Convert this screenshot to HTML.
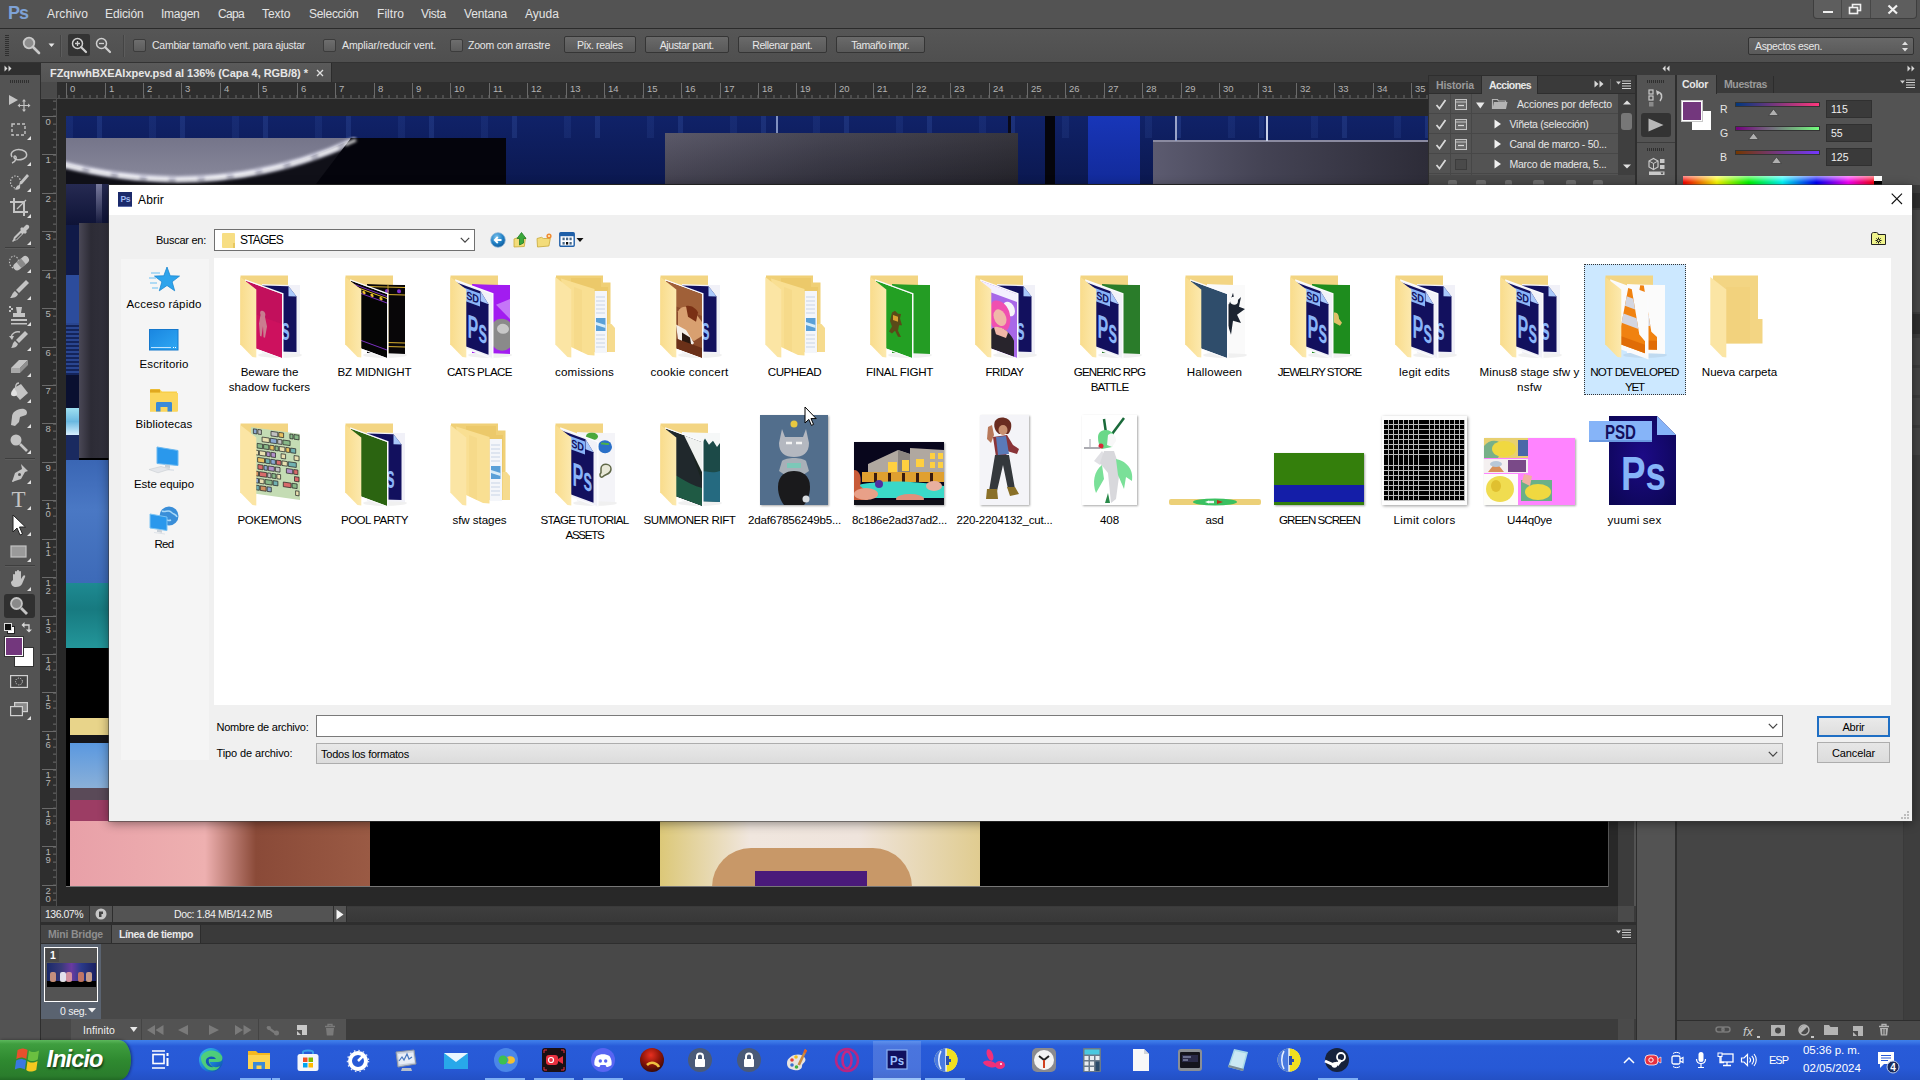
<!DOCTYPE html>
<html><head><meta charset="utf-8"><title>Abrir</title>
<style>
html,body{margin:0;padding:0;width:1920px;height:1080px;overflow:hidden;background:#535353;}
body{font-family:"Liberation Sans",sans-serif;position:relative;}
.r{position:absolute;display:block;}
.t{position:absolute;white-space:nowrap;font-family:"Liberation Sans",sans-serif;}
</style></head><body>
<!-- gen_ps -->
<div class="r" style="left:0px;top:0px;width:1920px;height:1080px;background:#535353;"></div>
<div class="r" style="left:0px;top:0px;width:1920px;height:28px;background:#535353;"></div>
<div class="r" style="left:0px;top:28px;width:1920px;height:1px;background:#2b2b2b;"></div>
<div class="t" style="left:8.00px;top:2.00px;font-size:18px;line-height:22px;color:#7ea2d6;letter-spacing:-1.009px;font-weight:bold;">Ps</div>
<div class="t" style="left:47.00px;top:6.00px;font-size:12px;line-height:16px;color:#e4e4e4;letter-spacing:0.141px;">Archivo</div>
<div class="t" style="left:105.00px;top:6.00px;font-size:12px;line-height:16px;color:#e4e4e4;letter-spacing:-0.122px;">Edición</div>
<div class="t" style="left:161.00px;top:6.00px;font-size:12px;line-height:16px;color:#e4e4e4;letter-spacing:-0.254px;">Imagen</div>
<div class="t" style="left:218.00px;top:6.00px;font-size:12px;line-height:16px;color:#e4e4e4;letter-spacing:-0.671px;">Capa</div>
<div class="t" style="left:262.00px;top:6.00px;font-size:12px;line-height:16px;color:#e4e4e4;letter-spacing:-0.036px;">Texto</div>
<div class="t" style="left:309.00px;top:6.00px;font-size:12px;line-height:16px;color:#e4e4e4;letter-spacing:-0.281px;">Selección</div>
<div class="t" style="left:377.00px;top:6.00px;font-size:12px;line-height:16px;color:#e4e4e4;letter-spacing:0.056px;">Filtro</div>
<div class="t" style="left:421.00px;top:6.00px;font-size:12px;line-height:16px;color:#e4e4e4;letter-spacing:-0.292px;">Vista</div>
<div class="t" style="left:464.00px;top:6.00px;font-size:12px;line-height:16px;color:#e4e4e4;letter-spacing:-0.149px;">Ventana</div>
<div class="t" style="left:525.00px;top:6.00px;font-size:12px;line-height:16px;color:#e4e4e4;letter-spacing:0.038px;">Ayuda</div>
<div class="r" style="left:1814px;top:0px;width:102px;height:18px;background:#5e5e5e;border-radius:0 0 3px 3px;box-shadow:0 0 0 1px #3e3e3e;"></div>
<div class="r" style="left:1841px;top:0px;width:1px;height:18px;background:#474747;"></div>
<div class="r" style="left:1870px;top:0px;width:1px;height:18px;background:#474747;"></div>
<div class="r" style="left:1823px;top:11px;width:10px;height:2px;background:#f0f0f0;"></div>
<svg class="r" style="left:1848px;top:3px" width="14" height="12"><rect x="4.5" y="1.5" width="8" height="6" fill="none" stroke="#f0f0f0" stroke-width="1.6"/><rect x="1.5" y="4.5" width="8" height="6" fill="#5e5e5e" stroke="#f0f0f0" stroke-width="1.6"/></svg>
<svg class="r" style="left:1887px;top:4px" width="12" height="11"><path d="M1.5 1.5L10 9.5M10 1.5L1.5 9.5" stroke="#f0f0f0" stroke-width="2.2"/></svg>
<div class="r" style="left:0px;top:29px;width:1920px;height:33px;background:linear-gradient(#565656,#4f4f4f);"></div>
<div class="r" style="left:0px;top:62px;width:1920px;height:1px;background:#333;"></div>
<div class="r" style="left:5px;top:35px;width:4px;height:22px;background:repeating-linear-gradient(#2f2f2f 0 1px,transparent 1px 2px);"></div>
<svg class="r" style="left:20px;top:34px" width="22" height="22"><circle cx="9" cy="9" r="5.3" fill="#8d8d8d" stroke="#c9c9c9" stroke-width="1.8"/><path d="M13 13L19 19" stroke="#c9c9c9" stroke-width="2.6" stroke-linecap="round"/></svg>
<svg class="r" style="left:48px;top:43px" width="8" height="5"><path d="M0.5 0.5h6l-3 3.5z" fill="#e8e8e8"/></svg>
<div class="r" style="left:60px;top:35px;width:1px;height:22px;background:#444;"></div>
<div class="r" style="left:61px;top:35px;width:1px;height:22px;background:#5c5c5c;"></div>
<div class="r" style="left:68px;top:34px;width:22px;height:22px;background:#333;border-radius:2px;"></div>
<svg class="r" style="left:70px;top:36px" width="20" height="20"><circle cx="7.5" cy="7.5" r="5" fill="none" stroke="#cfcfcf" stroke-width="1.5"/><path d="M11.2 11.2L16 16" stroke="#cfcfcf" stroke-width="2.2" stroke-linecap="round"/><path d="M5 7.5h5M7.5 5v5" stroke="#cfcfcf" stroke-width="1.3"/></svg>
<svg class="r" style="left:94px;top:36px" width="20" height="20"><circle cx="7.5" cy="7.5" r="5" fill="none" stroke="#cfcfcf" stroke-width="1.5"/><path d="M11.2 11.2L16 16" stroke="#cfcfcf" stroke-width="2.2" stroke-linecap="round"/><path d="M5 7.5h5" stroke="#cfcfcf" stroke-width="1.3"/></svg>
<div class="r" style="left:123px;top:35px;width:1px;height:22px;background:#444;"></div>
<div class="r" style="left:124px;top:35px;width:1px;height:22px;background:#5c5c5c;"></div>
<div class="r" style="left:133px;top:39px;width:13px;height:13px;background:linear-gradient(#6e6e6e,#5c5c5c);border:1px solid #3c3c3c;box-sizing:border-box;border-radius:2px;"></div>
<div class="t" style="left:152.00px;top:37.75px;font-size:10.5px;line-height:14.5px;color:#e6e6e6;letter-spacing:-0.262px;">Cambiar tamaño vent. para ajustar</div>
<div class="r" style="left:323px;top:39px;width:13px;height:13px;background:linear-gradient(#6e6e6e,#5c5c5c);border:1px solid #3c3c3c;box-sizing:border-box;border-radius:2px;"></div>
<div class="t" style="left:342.00px;top:37.75px;font-size:10.5px;line-height:14.5px;color:#e6e6e6;letter-spacing:-0.109px;">Ampliar/reducir vent.</div>
<div class="r" style="left:450px;top:39px;width:13px;height:13px;background:linear-gradient(#6e6e6e,#5c5c5c);border:1px solid #3c3c3c;box-sizing:border-box;border-radius:2px;"></div>
<div class="t" style="left:468.00px;top:37.75px;font-size:10.5px;line-height:14.5px;color:#e6e6e6;letter-spacing:-0.222px;">Zoom con arrastre</div>
<div class="r" style="left:564px;top:36px;width:71.5px;height:17px;background:linear-gradient(#6a6a6a,#595959);border:1px solid #353535;box-sizing:border-box;border-radius:2px;"></div>
<div class="t" style="left:576.93px;top:37.75px;font-size:10.5px;line-height:14.5px;color:#e8e8e8;letter-spacing:-0.361px;">Píx. reales</div>
<div class="r" style="left:645px;top:36px;width:83.5px;height:17px;background:linear-gradient(#6a6a6a,#595959);border:1px solid #353535;box-sizing:border-box;border-radius:2px;"></div>
<div class="t" style="left:659.63px;top:37.75px;font-size:10.5px;line-height:14.5px;color:#e8e8e8;letter-spacing:-0.363px;">Ajustar pant.</div>
<div class="r" style="left:738px;top:36px;width:88.5px;height:17px;background:linear-gradient(#6a6a6a,#595959);border:1px solid #353535;box-sizing:border-box;border-radius:2px;"></div>
<div class="t" style="left:752.18px;top:37.75px;font-size:10.5px;line-height:14.5px;color:#e8e8e8;letter-spacing:-0.374px;">Rellenar pant.</div>
<div class="r" style="left:836px;top:36px;width:88.5px;height:17px;background:linear-gradient(#6a6a6a,#595959);border:1px solid #353535;box-sizing:border-box;border-radius:2px;"></div>
<div class="t" style="left:851.26px;top:37.75px;font-size:10.5px;line-height:14.5px;color:#e8e8e8;letter-spacing:-0.420px;">Tamaño impr.</div>
<div class="r" style="left:1748px;top:37px;width:166px;height:18px;background:linear-gradient(#686868,#5a5a5a);border:1px solid #333;box-sizing:border-box;border-radius:2px;"></div>
<div class="t" style="left:1755.00px;top:38.75px;font-size:10.5px;line-height:14.5px;color:#e8e8e8;letter-spacing:-0.342px;">Aspectos esen.</div>
<svg class="r" style="left:1901px;top:41px" width="8" height="11"><path d="M1 4l3-3.5 3 3.5zM1 7l3 3.5 3-3.5z" fill="#e0e0e0"/></svg>
<!-- gen_doc -->
<div class="r" style="left:41px;top:63px;width:1387px;height:19px;background:#3a3a3a;"></div>
<div class="r" style="left:41px;top:63px;width:290px;height:19px;background:linear-gradient(#5a5a5a,#535353);border-right:1px solid #2c2c2c;"></div>
<div class="t" style="left:50.00px;top:65.50px;font-size:11px;line-height:15px;color:#e6e6e6;letter-spacing:-0.035px;font-weight:bold;">FZqnwhBXEAIxpev.psd al 136% (Capa 4, RGB/8) *</div>
<svg class="r" style="left:316px;top:69px" width="8" height="8"><path d="M1 1l6 6M7 1l-6 6" stroke="#e0e0e0" stroke-width="1.3"/></svg>
<div class="r" style="left:57px;top:99px;width:1561px;height:807px;background:#282828;"></div>
<div class="r" style="left:41px;top:82px;width:1387px;height:17px;background:#2e2e2e;"></div>
<div class="r" style="left:41px;top:82px;width:16px;height:16px;background:#4a4a4a;"></div>
<div class="r" style="left:41px;top:98px;width:1387px;height:1px;background:#4f4f4f;"></div>
<div class="r" style="left:66px;top:83px;width:1px;height:15px;background:#6a6a6a;"></div>
<div class="t" style="left:70.00px;top:81.75px;font-size:9.5px;line-height:13.5px;color:#b4b4b4;">0</div>
<div class="r" style="left:105px;top:83px;width:1px;height:15px;background:#6a6a6a;"></div>
<div class="t" style="left:109.00px;top:81.75px;font-size:9.5px;line-height:13.5px;color:#b4b4b4;">1</div>
<div class="r" style="left:143px;top:83px;width:1px;height:15px;background:#6a6a6a;"></div>
<div class="t" style="left:147.00px;top:81.75px;font-size:9.5px;line-height:13.5px;color:#b4b4b4;">2</div>
<div class="r" style="left:181px;top:83px;width:1px;height:15px;background:#6a6a6a;"></div>
<div class="t" style="left:185.00px;top:81.75px;font-size:9.5px;line-height:13.5px;color:#b4b4b4;">3</div>
<div class="r" style="left:220px;top:83px;width:1px;height:15px;background:#6a6a6a;"></div>
<div class="t" style="left:224.00px;top:81.75px;font-size:9.5px;line-height:13.5px;color:#b4b4b4;">4</div>
<div class="r" style="left:258px;top:83px;width:1px;height:15px;background:#6a6a6a;"></div>
<div class="t" style="left:262.00px;top:81.75px;font-size:9.5px;line-height:13.5px;color:#b4b4b4;">5</div>
<div class="r" style="left:297px;top:83px;width:1px;height:15px;background:#6a6a6a;"></div>
<div class="t" style="left:301.00px;top:81.75px;font-size:9.5px;line-height:13.5px;color:#b4b4b4;">6</div>
<div class="r" style="left:335px;top:83px;width:1px;height:15px;background:#6a6a6a;"></div>
<div class="t" style="left:339.00px;top:81.75px;font-size:9.5px;line-height:13.5px;color:#b4b4b4;">7</div>
<div class="r" style="left:374px;top:83px;width:1px;height:15px;background:#6a6a6a;"></div>
<div class="t" style="left:378.00px;top:81.75px;font-size:9.5px;line-height:13.5px;color:#b4b4b4;">8</div>
<div class="r" style="left:412px;top:83px;width:1px;height:15px;background:#6a6a6a;"></div>
<div class="t" style="left:416.00px;top:81.75px;font-size:9.5px;line-height:13.5px;color:#b4b4b4;">9</div>
<div class="r" style="left:450px;top:83px;width:1px;height:15px;background:#6a6a6a;"></div>
<div class="t" style="left:454.00px;top:81.75px;font-size:9.5px;line-height:13.5px;color:#b4b4b4;">10</div>
<div class="r" style="left:489px;top:83px;width:1px;height:15px;background:#6a6a6a;"></div>
<div class="t" style="left:493.00px;top:81.75px;font-size:9.5px;line-height:13.5px;color:#b4b4b4;">11</div>
<div class="r" style="left:527px;top:83px;width:1px;height:15px;background:#6a6a6a;"></div>
<div class="t" style="left:531.00px;top:81.75px;font-size:9.5px;line-height:13.5px;color:#b4b4b4;">12</div>
<div class="r" style="left:566px;top:83px;width:1px;height:15px;background:#6a6a6a;"></div>
<div class="t" style="left:570.00px;top:81.75px;font-size:9.5px;line-height:13.5px;color:#b4b4b4;">13</div>
<div class="r" style="left:604px;top:83px;width:1px;height:15px;background:#6a6a6a;"></div>
<div class="t" style="left:608.00px;top:81.75px;font-size:9.5px;line-height:13.5px;color:#b4b4b4;">14</div>
<div class="r" style="left:643px;top:83px;width:1px;height:15px;background:#6a6a6a;"></div>
<div class="t" style="left:647.00px;top:81.75px;font-size:9.5px;line-height:13.5px;color:#b4b4b4;">15</div>
<div class="r" style="left:681px;top:83px;width:1px;height:15px;background:#6a6a6a;"></div>
<div class="t" style="left:685.00px;top:81.75px;font-size:9.5px;line-height:13.5px;color:#b4b4b4;">16</div>
<div class="r" style="left:720px;top:83px;width:1px;height:15px;background:#6a6a6a;"></div>
<div class="t" style="left:724.00px;top:81.75px;font-size:9.5px;line-height:13.5px;color:#b4b4b4;">17</div>
<div class="r" style="left:758px;top:83px;width:1px;height:15px;background:#6a6a6a;"></div>
<div class="t" style="left:762.00px;top:81.75px;font-size:9.5px;line-height:13.5px;color:#b4b4b4;">18</div>
<div class="r" style="left:796px;top:83px;width:1px;height:15px;background:#6a6a6a;"></div>
<div class="t" style="left:800.00px;top:81.75px;font-size:9.5px;line-height:13.5px;color:#b4b4b4;">19</div>
<div class="r" style="left:835px;top:83px;width:1px;height:15px;background:#6a6a6a;"></div>
<div class="t" style="left:839.00px;top:81.75px;font-size:9.5px;line-height:13.5px;color:#b4b4b4;">20</div>
<div class="r" style="left:873px;top:83px;width:1px;height:15px;background:#6a6a6a;"></div>
<div class="t" style="left:877.00px;top:81.75px;font-size:9.5px;line-height:13.5px;color:#b4b4b4;">21</div>
<div class="r" style="left:912px;top:83px;width:1px;height:15px;background:#6a6a6a;"></div>
<div class="t" style="left:916.00px;top:81.75px;font-size:9.5px;line-height:13.5px;color:#b4b4b4;">22</div>
<div class="r" style="left:950px;top:83px;width:1px;height:15px;background:#6a6a6a;"></div>
<div class="t" style="left:954.00px;top:81.75px;font-size:9.5px;line-height:13.5px;color:#b4b4b4;">23</div>
<div class="r" style="left:989px;top:83px;width:1px;height:15px;background:#6a6a6a;"></div>
<div class="t" style="left:993.00px;top:81.75px;font-size:9.5px;line-height:13.5px;color:#b4b4b4;">24</div>
<div class="r" style="left:1027px;top:83px;width:1px;height:15px;background:#6a6a6a;"></div>
<div class="t" style="left:1031.00px;top:81.75px;font-size:9.5px;line-height:13.5px;color:#b4b4b4;">25</div>
<div class="r" style="left:1065px;top:83px;width:1px;height:15px;background:#6a6a6a;"></div>
<div class="t" style="left:1069.00px;top:81.75px;font-size:9.5px;line-height:13.5px;color:#b4b4b4;">26</div>
<div class="r" style="left:1104px;top:83px;width:1px;height:15px;background:#6a6a6a;"></div>
<div class="t" style="left:1108.00px;top:81.75px;font-size:9.5px;line-height:13.5px;color:#b4b4b4;">27</div>
<div class="r" style="left:1142px;top:83px;width:1px;height:15px;background:#6a6a6a;"></div>
<div class="t" style="left:1146.00px;top:81.75px;font-size:9.5px;line-height:13.5px;color:#b4b4b4;">28</div>
<div class="r" style="left:1181px;top:83px;width:1px;height:15px;background:#6a6a6a;"></div>
<div class="t" style="left:1185.00px;top:81.75px;font-size:9.5px;line-height:13.5px;color:#b4b4b4;">29</div>
<div class="r" style="left:1219px;top:83px;width:1px;height:15px;background:#6a6a6a;"></div>
<div class="t" style="left:1223.00px;top:81.75px;font-size:9.5px;line-height:13.5px;color:#b4b4b4;">30</div>
<div class="r" style="left:1258px;top:83px;width:1px;height:15px;background:#6a6a6a;"></div>
<div class="t" style="left:1262.00px;top:81.75px;font-size:9.5px;line-height:13.5px;color:#b4b4b4;">31</div>
<div class="r" style="left:1296px;top:83px;width:1px;height:15px;background:#6a6a6a;"></div>
<div class="t" style="left:1300.00px;top:81.75px;font-size:9.5px;line-height:13.5px;color:#b4b4b4;">32</div>
<div class="r" style="left:1334px;top:83px;width:1px;height:15px;background:#6a6a6a;"></div>
<div class="t" style="left:1338.00px;top:81.75px;font-size:9.5px;line-height:13.5px;color:#b4b4b4;">33</div>
<div class="r" style="left:1373px;top:83px;width:1px;height:15px;background:#6a6a6a;"></div>
<div class="t" style="left:1377.00px;top:81.75px;font-size:9.5px;line-height:13.5px;color:#b4b4b4;">34</div>
<div class="r" style="left:1411px;top:83px;width:1px;height:15px;background:#6a6a6a;"></div>
<div class="t" style="left:1415.00px;top:81.75px;font-size:9.5px;line-height:13.5px;color:#b4b4b4;">35</div>
<div class="r" style="left:57px;top:95px;width:1371px;height:3px;background:repeating-linear-gradient(90deg,#6a6a6a 0 1px,transparent 1px 7.686px);background-position:1.51px 0;"></div>
<div class="r" style="left:41px;top:99px;width:16px;height:807px;background:#2e2e2e;"></div>
<div class="r" style="left:56px;top:99px;width:1px;height:807px;background:#4f4f4f;"></div>
<div class="r" style="left:42px;top:116px;width:14px;height:1px;background:#6a6a6a;"></div>
<div class="t" style="left:45.50px;top:115.25px;font-size:9.5px;line-height:13.5px;color:#b4b4b4;">0</div>
<div class="r" style="left:42px;top:154px;width:14px;height:1px;background:#6a6a6a;"></div>
<div class="t" style="left:45.50px;top:153.25px;font-size:9.5px;line-height:13.5px;color:#b4b4b4;">1</div>
<div class="r" style="left:42px;top:193px;width:14px;height:1px;background:#6a6a6a;"></div>
<div class="t" style="left:45.50px;top:192.25px;font-size:9.5px;line-height:13.5px;color:#b4b4b4;">2</div>
<div class="r" style="left:42px;top:231px;width:14px;height:1px;background:#6a6a6a;"></div>
<div class="t" style="left:45.50px;top:230.25px;font-size:9.5px;line-height:13.5px;color:#b4b4b4;">3</div>
<div class="r" style="left:42px;top:270px;width:14px;height:1px;background:#6a6a6a;"></div>
<div class="t" style="left:45.50px;top:269.25px;font-size:9.5px;line-height:13.5px;color:#b4b4b4;">4</div>
<div class="r" style="left:42px;top:308px;width:14px;height:1px;background:#6a6a6a;"></div>
<div class="t" style="left:45.50px;top:307.25px;font-size:9.5px;line-height:13.5px;color:#b4b4b4;">5</div>
<div class="r" style="left:42px;top:347px;width:14px;height:1px;background:#6a6a6a;"></div>
<div class="t" style="left:45.50px;top:346.25px;font-size:9.5px;line-height:13.5px;color:#b4b4b4;">6</div>
<div class="r" style="left:42px;top:385px;width:14px;height:1px;background:#6a6a6a;"></div>
<div class="t" style="left:45.50px;top:384.25px;font-size:9.5px;line-height:13.5px;color:#b4b4b4;">7</div>
<div class="r" style="left:42px;top:423px;width:14px;height:1px;background:#6a6a6a;"></div>
<div class="t" style="left:45.50px;top:422.25px;font-size:9.5px;line-height:13.5px;color:#b4b4b4;">8</div>
<div class="r" style="left:42px;top:462px;width:14px;height:1px;background:#6a6a6a;"></div>
<div class="t" style="left:45.50px;top:461.25px;font-size:9.5px;line-height:13.5px;color:#b4b4b4;">9</div>
<div class="r" style="left:42px;top:500px;width:14px;height:1px;background:#6a6a6a;"></div>
<div class="t" style="left:45.50px;top:499.25px;font-size:9.5px;line-height:13.5px;color:#b4b4b4;">1</div>
<div class="t" style="left:45.50px;top:507.25px;font-size:9.5px;line-height:13.5px;color:#b4b4b4;">0</div>
<div class="r" style="left:42px;top:539px;width:14px;height:1px;background:#6a6a6a;"></div>
<div class="t" style="left:45.50px;top:538.25px;font-size:9.5px;line-height:13.5px;color:#b4b4b4;">1</div>
<div class="t" style="left:45.50px;top:546.25px;font-size:9.5px;line-height:13.5px;color:#b4b4b4;">1</div>
<div class="r" style="left:42px;top:577px;width:14px;height:1px;background:#6a6a6a;"></div>
<div class="t" style="left:45.50px;top:576.25px;font-size:9.5px;line-height:13.5px;color:#b4b4b4;">1</div>
<div class="t" style="left:45.50px;top:584.25px;font-size:9.5px;line-height:13.5px;color:#b4b4b4;">2</div>
<div class="r" style="left:42px;top:616px;width:14px;height:1px;background:#6a6a6a;"></div>
<div class="t" style="left:45.50px;top:615.25px;font-size:9.5px;line-height:13.5px;color:#b4b4b4;">1</div>
<div class="t" style="left:45.50px;top:623.25px;font-size:9.5px;line-height:13.5px;color:#b4b4b4;">3</div>
<div class="r" style="left:42px;top:654px;width:14px;height:1px;background:#6a6a6a;"></div>
<div class="t" style="left:45.50px;top:653.25px;font-size:9.5px;line-height:13.5px;color:#b4b4b4;">1</div>
<div class="t" style="left:45.50px;top:661.25px;font-size:9.5px;line-height:13.5px;color:#b4b4b4;">4</div>
<div class="r" style="left:42px;top:692px;width:14px;height:1px;background:#6a6a6a;"></div>
<div class="t" style="left:45.50px;top:691.25px;font-size:9.5px;line-height:13.5px;color:#b4b4b4;">1</div>
<div class="t" style="left:45.50px;top:699.25px;font-size:9.5px;line-height:13.5px;color:#b4b4b4;">5</div>
<div class="r" style="left:42px;top:731px;width:14px;height:1px;background:#6a6a6a;"></div>
<div class="t" style="left:45.50px;top:730.25px;font-size:9.5px;line-height:13.5px;color:#b4b4b4;">1</div>
<div class="t" style="left:45.50px;top:738.25px;font-size:9.5px;line-height:13.5px;color:#b4b4b4;">6</div>
<div class="r" style="left:42px;top:769px;width:14px;height:1px;background:#6a6a6a;"></div>
<div class="t" style="left:45.50px;top:768.25px;font-size:9.5px;line-height:13.5px;color:#b4b4b4;">1</div>
<div class="t" style="left:45.50px;top:776.25px;font-size:9.5px;line-height:13.5px;color:#b4b4b4;">7</div>
<div class="r" style="left:42px;top:808px;width:14px;height:1px;background:#6a6a6a;"></div>
<div class="t" style="left:45.50px;top:807.25px;font-size:9.5px;line-height:13.5px;color:#b4b4b4;">1</div>
<div class="t" style="left:45.50px;top:815.25px;font-size:9.5px;line-height:13.5px;color:#b4b4b4;">8</div>
<div class="r" style="left:42px;top:846px;width:14px;height:1px;background:#6a6a6a;"></div>
<div class="t" style="left:45.50px;top:845.25px;font-size:9.5px;line-height:13.5px;color:#b4b4b4;">1</div>
<div class="t" style="left:45.50px;top:853.25px;font-size:9.5px;line-height:13.5px;color:#b4b4b4;">9</div>
<div class="r" style="left:42px;top:885px;width:14px;height:1px;background:#6a6a6a;"></div>
<div class="t" style="left:45.50px;top:884.25px;font-size:9.5px;line-height:13.5px;color:#b4b4b4;">2</div>
<div class="t" style="left:45.50px;top:892.25px;font-size:9.5px;line-height:13.5px;color:#b4b4b4;">0</div>
<div class="r" style="left:53px;top:99px;width:3px;height:807px;background:repeating-linear-gradient(#6a6a6a 0 1px,transparent 1px 7.686px);background-position:0 1.63px;"></div>
<div class="r" style="left:66px;top:116px;width:1542px;height:771px;background:#000;"></div>
<div class="r" style="left:66px;top:116px;width:1362px;height:68px;background:linear-gradient(#102268,#0b1850);"></div>
<div class="r" style="left:66px;top:116px;width:1362px;height:22px;background:repeating-linear-gradient(90deg,rgba(90,130,220,.10) 0 7px,transparent 7px 31px,rgba(90,130,220,.16) 31px 36px,transparent 36px 83px);"></div>
<div class="r" style="left:66px;top:138px;width:300px;height:46px;background:linear-gradient(#75758a,#8a8a9c);"></div>
<div class="r" style="left:350px;top:138px;width:150px;height:46px;background:#04040c;"></div>
<svg class="r" style="left:66px;top:130px" width="440" height="54"><defs><filter id="gl"><feGaussianBlur stdDeviation="1.6"/></filter></defs><path d="M0 34 Q150 74 285 10 L300 10 L300 54 L0 54Z" fill="#101018"/><path d="M-5 34 Q150 74 290 10" fill="none" stroke="#d8d8e8" stroke-width="7" filter="url(#gl)" opacity=".8"/><path d="M285 8 L440 8 L440 54 L250 54 Z" fill="#04040c"/><path d="M-5 34 Q150 74 290 10" fill="none" stroke="#fff" stroke-width="3" filter="url(#gl)" stroke-dasharray="22 7" opacity=".9"/></svg>
<div class="r" style="left:665px;top:133px;width:353px;height:51px;background:linear-gradient(90deg,#514f60,#3b3a48 45%,#2a2932);"></div>
<div class="r" style="left:665px;top:133px;width:353px;height:51px;background:linear-gradient(rgba(255,255,255,.06),rgba(0,0,0,.18));"></div>
<div class="r" style="left:1008px;top:116px;width:3px;height:17px;background:#0a0a18;"></div>
<div class="r" style="left:776px;top:116px;width:2px;height:17px;background:#8090c0;"></div>
<div class="r" style="left:1045px;top:116px;width:10px;height:68px;background:#05050c;"></div>
<div class="r" style="left:1088px;top:116px;width:52px;height:68px;background:linear-gradient(#1836b8,#122a9a);"></div>
<div class="r" style="left:1153px;top:141px;width:275px;height:43px;background:linear-gradient(90deg,#5c5b70,#444354 40%,#2d2c38);"></div>
<div class="r" style="left:1153px;top:140px;width:275px;height:2px;background:#8a8aa0;"></div>
<div class="r" style="left:1175px;top:116px;width:2px;height:25px;background:#9aa4c8;"></div>
<div class="r" style="left:1266px;top:116px;width:2px;height:25px;background:#c8d0e8;"></div>
<div class="r" style="left:66px;top:184px;width:43px;height:41px;background:linear-gradient(#262a52,#0e1336);"></div>
<div class="r" style="left:96px;top:184px;width:6px;height:39px;background:linear-gradient(rgba(200,200,230,.5),rgba(200,200,230,.05));"></div>
<div class="r" style="left:66px;top:225px;width:13px;height:50px;background:#101a48;"></div>
<div class="r" style="left:66px;top:275px;width:13px;height:48px;background:#2c4c9c;"></div>
<div class="r" style="left:66px;top:323px;width:13px;height:52px;background:repeating-linear-gradient(#2a4690 0 2px,#14245a 2px 4px);"></div>
<div class="r" style="left:66px;top:375px;width:13px;height:33px;background:#0a1030;"></div>
<div class="r" style="left:66px;top:408px;width:13px;height:27px;background:linear-gradient(#9fe0f0,#6ab8e0 50%,#d8f0ff);"></div>
<div class="r" style="left:66px;top:435px;width:13px;height:25px;background:#1a2a60;"></div>
<div class="r" style="left:79px;top:223px;width:30px;height:235px;background:linear-gradient(90deg,#4a4856,#2c2b35 40%,#34333e);"></div>
<div class="r" style="left:66px;top:460px;width:43px;height:123px;background:linear-gradient(#3a66b4,#4a78c4 40%,#3d6ab8);"></div>
<div class="r" style="left:66px;top:583px;width:43px;height:65px;background:linear-gradient(#1e8a92,#177a80 40%,#23969a);"></div>
<div class="r" style="left:66px;top:648px;width:43px;height:70px;background:#000;"></div>
<div class="r" style="left:70px;top:718px;width:39px;height:17px;background:#e8d48a;"></div>
<div class="r" style="left:70px;top:735px;width:39px;height:8px;background:#15151a;"></div>
<div class="r" style="left:70px;top:743px;width:39px;height:45px;background:linear-gradient(#5a98e0,#8ab0d8);"></div>
<div class="r" style="left:70px;top:788px;width:39px;height:33px;background:#5a4a58;"></div>
<div class="r" style="left:70px;top:800px;width:39px;height:21px;background:#b8386a;opacity:.7;"></div>
<div class="r" style="left:70px;top:821px;width:300px;height:66px;background:linear-gradient(90deg,#e8a0a8,#eeb0b0 45%,#8a4a38 62%,#9a5a44);"></div>
<div class="r" style="left:370px;top:821px;width:290px;height:66px;background:#000;"></div>
<div class="r" style="left:660px;top:821px;width:320px;height:66px;background:linear-gradient(90deg,#dcc878,#f0e6de 28%,#efe4dc 62%,#e0cc90);"></div>
<div class="r" style="left:712px;top:848px;width:200px;height:39px;background:#c89868;border-radius:60px 60px 0 0;"></div>
<div class="r" style="left:755px;top:871px;width:112px;height:16px;background:#4a1a7a;"></div>
<div class="r" style="left:980px;top:821px;width:628px;height:66px;background:#000;"></div>
<div class="r" style="left:66px;top:886px;width:1542px;height:1px;background:#777;"></div>
<div class="r" style="left:1608px;top:116px;width:1px;height:771px;background:#555;"></div>
<div class="r" style="left:0px;top:63px;width:40px;height:843px;background:#535353;"></div>
<div class="r" style="left:40px;top:63px;width:1px;height:1017px;background:#2e2e2e;"></div>
<div class="r" style="left:0px;top:63px;width:40px;height:12px;background:#2f2f2f;"></div>
<svg class="r" style="left:4px;top:65px" width="9" height="7"><path d="M0.5 0.5l3 3-3 3zM4.5 0.5l3 3-3 3z" fill="#d8d8d8"/></svg>
<div class="r" style="left:10px;top:80px;width:20px;height:3px;background:repeating-linear-gradient(90deg,#2f2f2f 0 1px,transparent 1px 2px);"></div>
<!-- gen_tools -->
<div class="r" style="left:4px;top:594px;width:31px;height:24px;background:#303030;border-radius:3px;"></div>
<svg class="r" style="left:7px;top:90px" width="24" height="24" viewBox="0 0 24 24"><path d="M2 5l9 5-9 5z" fill="#c4c4c4"/><path d="M17 11v9M12.500 15.500h9" fill="none" stroke="#c4c4c4" stroke-width="1.2" /><path d="M17 9l2 2.500h-4zM17 22l2-2.500h-4zM10.500 15.500l2.500-2v4zM23.500 15.500l-2.500-2v4z" fill="#c4c4c4"/></svg>
<svg class="r" style="left:7px;top:117px" width="24" height="24" viewBox="0 0 24 24"><rect x="5" y="7" width="13" height="11" fill="none" stroke="#c4c4c4" stroke-width="1.400" stroke-dasharray="3 2"/></svg>
<svg class="r" style="left:27px;top:136px" width="4" height="4"><path d="M0 4h4v-4z" fill="#e0e0e0"/></svg>
<svg class="r" style="left:7px;top:143px" width="24" height="24" viewBox="0 0 24 24"><path d="M5 14c-3-5 4-9 10-7s6 7 1 9-9 0-9-2 3-1 2 2-4 4-4 4" fill="none" stroke="#c4c4c4" stroke-width="1.5" /></svg>
<svg class="r" style="left:27px;top:162px" width="4" height="4"><path d="M0 4h4v-4z" fill="#e0e0e0"/></svg>
<svg class="r" style="left:7px;top:169px" width="24" height="24" viewBox="0 0 24 24"><ellipse cx="8.500" cy="13" rx="5" ry="6" fill="none" stroke="#c4c4c4" stroke-width="1.200" stroke-dasharray="1.500 1.500"/><path d="M20 5l2 2-7 8-3 1 1-3z" fill="#c4c4c4"/><path d="M10 17c2-2 4 0 3 2s-4 2-6 1c2 0 2-2 3-3z" fill="#c4c4c4"/></svg>
<svg class="r" style="left:27px;top:188px" width="4" height="4"><path d="M0 4h4v-4z" fill="#e0e0e0"/></svg>
<svg class="r" style="left:7px;top:195px" width="24" height="24" viewBox="0 0 24 24"><path d="M7 3v14h14M3 7h14v14" fill="none" stroke="#c4c4c4" stroke-width="2" /><path d="M19 5l-9 9" fill="none" stroke="#c4c4c4" stroke-width="1.2" /></svg>
<svg class="r" style="left:27px;top:214px" width="4" height="4"><path d="M0 4h4v-4z" fill="#e0e0e0"/></svg>
<svg class="r" style="left:7px;top:222px" width="24" height="24" viewBox="0 0 24 24"><path d="M19 3c2-1 4 1 3 3l-3 3 1 1-2 2-1-1-7 7-3 1-1 1-1-1 1-1 1-3 7-7-1-1 2-2 1 1z" fill="#c4c4c4"/><path d="M8 17l6-6 1 1-6 6z" fill="#535353"/></svg>
<svg class="r" style="left:27px;top:241px" width="4" height="4"><path d="M0 4h4v-4z" fill="#e0e0e0"/></svg>
<svg class="r" style="left:7px;top:250px" width="24" height="24" viewBox="0 0 24 24"><ellipse cx="7" cy="12" rx="4.500" ry="6" fill="none" stroke="#c4c4c4" stroke-width="1.100" stroke-dasharray="1.500 1.500"/><g transform="rotate(-40 14 13)"><rect x="5" y="9.500" width="18" height="7.500" rx="3.700" fill="#c4c4c4"/><rect x="11" y="9.500" width="6" height="7.500" fill="#8a8a8a"/></g></svg>
<svg class="r" style="left:27px;top:269px" width="4" height="4"><path d="M0 4h4v-4z" fill="#e0e0e0"/></svg>
<svg class="r" style="left:7px;top:277px" width="24" height="24" viewBox="0 0 24 24"><path d="M19 3l3 3-10 10-3-3z" fill="#c4c4c4"/><path d="M8 14l3 3c-1 3-4 4-8 4 2-2 2-5 5-7z" fill="#c4c4c4"/></svg>
<svg class="r" style="left:27px;top:296px" width="4" height="4"><path d="M0 4h4v-4z" fill="#e0e0e0"/></svg>
<svg class="r" style="left:7px;top:303px" width="24" height="24" viewBox="0 0 24 24"><path d="M9 4h6l-1 6h4v4H6v-4h4z" fill="#c4c4c4"/><path d="M4 16h16v2H4z" fill="#c4c4c4"/><path d="M4 20h16v1.500H4z" fill="#c4c4c4"/><g fill="#c4c4c4"><rect x="2" y="3" width="2" height="2"/><rect x="4" y="5" width="2" height="2"/><rect x="2" y="7" width="2" height="2"/></g></svg>
<svg class="r" style="left:27px;top:322px" width="4" height="4"><path d="M0 4h4v-4z" fill="#e0e0e0"/></svg>
<svg class="r" style="left:7px;top:328px" width="24" height="24" viewBox="0 0 24 24"><path d="M18 3l3 3-9 9-3-3z" fill="#c4c4c4"/><path d="M8 13l3 3c-1 3-4 4-7 4 2-2 1-5 4-7z" fill="#c4c4c4"/><path d="M4 9c1-4 5-6 9-5" fill="none" stroke="#c4c4c4" stroke-width="1.3" /><path d="M2 8l3 4 2-4z" fill="#c4c4c4"/></svg>
<svg class="r" style="left:27px;top:347px" width="4" height="4"><path d="M0 4h4v-4z" fill="#e0e0e0"/></svg>
<svg class="r" style="left:7px;top:354px" width="24" height="24" viewBox="0 0 24 24"><path d="M4 14l8-8h9l-8 8z" fill="#c4c4c4"/><path d="M4 14h9v5H4z" fill="#a8a8a8"/><path d="M13 14l8-8v5l-8 8z" fill="#909090"/></svg>
<svg class="r" style="left:27px;top:373px" width="4" height="4"><path d="M0 4h4v-4z" fill="#e0e0e0"/></svg>
<svg class="r" style="left:7px;top:380px" width="24" height="24" viewBox="0 0 24 24"><path d="M7 8l7-4 7 9-8 7-6-7z" fill="#c4c4c4"/><path d="M4 14c0-3 2-4 3-6 1 2 3 3 3 6s-6 3-6 0z" fill="#e0e0e0"/><path d="M12 3c-3 0-4 3-3 7" fill="none" stroke="#c4c4c4" stroke-width="1.3" /></svg>
<svg class="r" style="left:27px;top:399px" width="4" height="4"><path d="M0 4h4v-4z" fill="#e0e0e0"/></svg>
<svg class="r" style="left:7px;top:405px" width="24" height="24" viewBox="0 0 24 24"><path d="M5 12c0-5 6-9 12-8 3 1 4 4 2 6l-6 2-1 5-4 4-4-1z" fill="#c4c4c4"/></svg>
<svg class="r" style="left:27px;top:424px" width="4" height="4"><path d="M0 4h4v-4z" fill="#e0e0e0"/></svg>
<svg class="r" style="left:7px;top:431px" width="24" height="24" viewBox="0 0 24 24"><circle cx="9" cy="9" r="5.500" fill="#c4c4c4"/><path d="M13 13l7 7" fill="none" stroke="#c4c4c4" stroke-width="2.6" /></svg>
<svg class="r" style="left:27px;top:450px" width="4" height="4"><path d="M0 4h4v-4z" fill="#e0e0e0"/></svg>
<svg class="r" style="left:7px;top:461px" width="24" height="24" viewBox="0 0 24 24"><path d="M14 3l7 7-3 1-4 7-9 3 3-9 7-4z" fill="#c4c4c4"/><path d="M8 20l5-5" fill="#535353"/><path d="M5.500 20.500l6-6" fill="none" stroke="#c4c4c4" stroke-width="1.2" stroke="#535353"/><circle cx="12.500" cy="13.500" r="1.500" fill="#535353"/></svg>
<svg class="r" style="left:27px;top:480px" width="4" height="4"><path d="M0 4h4v-4z" fill="#e0e0e0"/></svg>
<svg class="r" style="left:7px;top:487px" width="24" height="24" viewBox="0 0 24 24"><text x="4.500" y="20" font-size="23" fill="#c4c4c4" font-family="Liberation Serif">T</text></svg>
<svg class="r" style="left:27px;top:506px" width="4" height="4"><path d="M0 4h4v-4z" fill="#e0e0e0"/></svg>
<svg class="r" style="left:7px;top:513px" width="24" height="24" viewBox="0 0 24 24"><path d="M6 2v17l4-4 3 7 2.500-1-3-7h6z" fill="#fff" stroke="#222" stroke-width="1"/></svg>
<svg class="r" style="left:27px;top:532px" width="4" height="4"><path d="M0 4h4v-4z" fill="#e0e0e0"/></svg>
<svg class="r" style="left:7px;top:539px" width="24" height="24" viewBox="0 0 24 24"><rect x="4" y="7" width="15" height="11" fill="#9a9a9a" stroke="#c4c4c4" stroke-width="1.200"/></svg>
<svg class="r" style="left:27px;top:558px" width="4" height="4"><path d="M0 4h4v-4z" fill="#e0e0e0"/></svg>
<svg class="r" style="left:7px;top:568px" width="24" height="24" viewBox="0 0 24 24"><path d="M6 12v-5c0-1.500 2-1.500 2 0v-3c0-1.500 2-1.500 2 0v-1c0-1.500 2-1.500 2 0v1c0-1.500 2-1.500 2 0v7l2-3c1-1.500 3-.5 2 1l-3 7c-1 2-3 3-6 3s-5-2-5-5z" fill="#c4c4c4"/></svg>
<svg class="r" style="left:27px;top:587px" width="4" height="4"><path d="M0 4h4v-4z" fill="#e0e0e0"/></svg>
<svg class="r" style="left:7px;top:594px" width="24" height="24" viewBox="0 0 24 24"><circle cx="9.500" cy="9.500" r="5.500" fill="#8a8a8a" stroke="#c4c4c4" stroke-width="1.800"/><path d="M14 14l6 6" fill="none" stroke="#c4c4c4" stroke-width="2.8" /></svg>
<div class="r" style="left:5px;top:247px;width:30px;height:1px;background:#3e3e3e;"></div>
<div class="r" style="left:5px;top:248px;width:30px;height:1px;background:#5c5c5c;"></div>
<div class="r" style="left:5px;top:458px;width:30px;height:1px;background:#3e3e3e;"></div>
<div class="r" style="left:5px;top:459px;width:30px;height:1px;background:#5c5c5c;"></div>
<div class="r" style="left:5px;top:565px;width:30px;height:1px;background:#3e3e3e;"></div>
<div class="r" style="left:5px;top:566px;width:30px;height:1px;background:#5c5c5c;"></div>
<div class="r" style="left:7px;top:626px;width:6px;height:6px;background:#fff;border:1px solid #222;"></div>
<div class="r" style="left:4px;top:623px;width:6px;height:6px;background:#111;border:1px solid #ddd;"></div>
<svg class="r" style="left:21px;top:621px" width="12" height="12"><path d="M3 4h5v5" fill="none" stroke="#d8d8d8" stroke-width="1.300"/><path d="M0.500 4l3-3v6zM8 11.500l-3-3h6z" fill="#d8d8d8"/></svg>
<div class="r" style="left:15px;top:648px;width:18px;height:18px;background:#fff;box-shadow:0 0 0 1px #333;"></div>
<div class="r" style="left:5px;top:637px;width:18px;height:19px;background:#73377d;border:1px solid #fff;box-sizing:border-box;box-shadow:0 0 0 1px #333;"></div>
<svg class="r" style="left:10px;top:675px" width="18" height="13"><rect x=".6" y=".6" width="16.800" height="11.800" fill="#444" stroke="#d0d0d0" stroke-width="1.200"/><circle cx="9" cy="6.500" r="3.400" fill="none" stroke="#d0d0d0" stroke-width="1" stroke-dasharray="1.200 1.200"/></svg>
<svg class="r" style="left:10px;top:702px" width="20" height="15"><rect x="4.600" y=".6" width="12.800" height="9" fill="#8a8a8a" stroke="#d0d0d0" stroke-width="1.200"/><rect x=".6" y="4.600" width="11.800" height="9" fill="#535353" stroke="#d0d0d0" stroke-width="1.200"/></svg>
<svg class="r" style="left:27px;top:716px" width="4" height="4"><path d="M0 4h4v-4z" fill="#e0e0e0"/></svg>
<!-- gen_right -->
<div class="r" style="left:1428px;top:63px;width:492px;height:12px;background:#3a3a3a;"></div>
<svg class="r" style="left:1662px;top:65px" width="9" height="7"><path d="M3.5 0.5l-3 3 3 3zM7.500 0.500l-3 3 3 3z" fill="#d8d8d8"/></svg>
<svg class="r" style="left:1907px;top:65px" width="9" height="7"><path d="M0.5 0.5l3 3-3 3zM4.500 0.500l3 3-3 3z" fill="#d8d8d8"/></svg>
<div class="r" style="left:1428px;top:75px;width:208px;height:110px;background:#2e2e2e;"></div>
<div class="r" style="left:1429px;top:76px;width:206px;height:17px;background:#3a3a3a;"></div>
<div class="t" style="left:1436.00px;top:77.75px;font-size:10.5px;line-height:14.5px;color:#9a9a9a;letter-spacing:-0.137px;font-weight:bold;">Historia</div>
<div class="r" style="left:1481px;top:76px;width:57px;height:18px;background:#535353;border-left:1px solid #2c2c2c;border-right:1px solid #2c2c2c;box-sizing:border-box;"></div>
<div class="t" style="left:1489.00px;top:77.75px;font-size:10.5px;line-height:14.5px;color:#e8e8e8;letter-spacing:-0.586px;font-weight:bold;">Acciones</div>
<svg class="r" style="left:1594px;top:80px" width="11" height="8"><path d="M0.5 0.5l4 3.500-4 3.500zM5.500 0.500l4 3.500-4 3.500z" fill="#d8d8d8"/></svg>
<div class="r" style="left:1610px;top:79px;width:1px;height:11px;background:#555;"></div>
<svg class="r" style="left:1616px;top:80px" width="16" height="9"><path d="M0 1.5h5l-2.500 3z" fill="#d0d0d0"/><path d="M6 1h9M6 3.500h9M6 6h9M6 8.500h9" stroke="#d0d0d0" stroke-width="1"/></svg>
<div class="r" style="left:1429px;top:94px;width:189px;height:81px;background:#535353;"></div>
<div class="r" style="left:1429px;top:113px;width:189px;height:1px;background:#474747;"></div>
<svg class="r" style="left:1435px;top:99px" width="12" height="11"><path d="M1.500 6l3 3.500 6-8.500" fill="none" stroke="#d8d8d8" stroke-width="1.800"/></svg>
<svg class="r" style="left:1455px;top:99px" width="12" height="11"><rect x=".5" y=".5" width="11" height="10" fill="#6a6a6a" stroke="#c4c4c4"/><path d="M0 3h12" stroke="#c4c4c4"/><path d="M3 6.500h6" stroke="#d8d8d8" stroke-width="1.200"/></svg>
<svg class="r" style="left:1476px;top:102px" width="9" height="7"><path d="M0 .5h8.500l-4.200 6z" fill="#e8e8e8"/></svg>
<svg class="r" style="left:1491px;top:98px" width="18" height="12"><path d="M1.500 11l1.500-7h13.500l-1.500 7z" fill="#b4b4b4"/><path d="M1.500 11v-9.500h5l1 1.500h7v2" fill="none" stroke="#b4b4b4" stroke-width="1.200"/></svg>
<div class="t" style="left:1517.00px;top:97.25px;font-size:10.5px;line-height:14.5px;color:#e6e6e6;letter-spacing:-0.153px;">Acciones por defecto</div>
<div class="r" style="left:1429px;top:133px;width:189px;height:1px;background:#474747;"></div>
<svg class="r" style="left:1435px;top:119px" width="12" height="11"><path d="M1.500 6l3 3.500 6-8.500" fill="none" stroke="#d8d8d8" stroke-width="1.800"/></svg>
<svg class="r" style="left:1455px;top:119px" width="12" height="11"><rect x=".5" y=".5" width="11" height="10" fill="#6a6a6a" stroke="#c4c4c4"/><path d="M0 3h12" stroke="#c4c4c4"/><path d="M3 6.500h6" stroke="#d8d8d8" stroke-width="1.200"/></svg>
<svg class="r" style="left:1494px;top:119px" width="8" height="10"><path d="M.5 .5l6.500 4.500-6.500 4.500z" fill="#f0f0f0"/></svg>
<div class="t" style="left:1509.50px;top:117.25px;font-size:10.5px;line-height:14.5px;color:#e6e6e6;letter-spacing:-0.237px;">Viñeta (selección)</div>
<div class="r" style="left:1429px;top:153px;width:189px;height:1px;background:#474747;"></div>
<svg class="r" style="left:1435px;top:139px" width="12" height="11"><path d="M1.500 6l3 3.500 6-8.500" fill="none" stroke="#d8d8d8" stroke-width="1.800"/></svg>
<svg class="r" style="left:1455px;top:139px" width="12" height="11"><rect x=".5" y=".5" width="11" height="10" fill="#6a6a6a" stroke="#c4c4c4"/><path d="M0 3h12" stroke="#c4c4c4"/><path d="M3 6.500h6" stroke="#d8d8d8" stroke-width="1.200"/></svg>
<svg class="r" style="left:1494px;top:139px" width="8" height="10"><path d="M.5 .5l6.500 4.500-6.500 4.500z" fill="#f0f0f0"/></svg>
<div class="t" style="left:1509.50px;top:137.25px;font-size:10.5px;line-height:14.5px;color:#e6e6e6;letter-spacing:-0.313px;">Canal de marco - 50...</div>
<div class="r" style="left:1429px;top:173px;width:189px;height:1px;background:#474747;"></div>
<svg class="r" style="left:1435px;top:159px" width="12" height="11"><path d="M1.500 6l3 3.500 6-8.500" fill="none" stroke="#d8d8d8" stroke-width="1.800"/></svg>
<div class="r" style="left:1455px;top:159px;width:12px;height:11px;background:#4a4a4a;border:1px solid #3c3c3c;box-sizing:border-box;"></div>
<svg class="r" style="left:1494px;top:159px" width="8" height="10"><path d="M.5 .5l6.500 4.500-6.500 4.500z" fill="#f0f0f0"/></svg>
<div class="t" style="left:1509.50px;top:157.25px;font-size:10.5px;line-height:14.5px;color:#e6e6e6;letter-spacing:-0.272px;">Marco de madera, 5...</div>
<div class="r" style="left:1450px;top:94px;width:1px;height:81px;background:#474747;"></div>
<div class="r" style="left:1471px;top:94px;width:1px;height:81px;background:#474747;"></div>
<div class="r" style="left:1618px;top:94px;width:17px;height:81px;background:#3f3f3f;"></div>
<svg class="r" style="left:1623px;top:100px" width="8" height="5"><path d="M0 4.500l4-4 4 4z" fill="#e0e0e0"/></svg>
<svg class="r" style="left:1623px;top:164px" width="8" height="5"><path d="M0 .5l4 4 4-4z" fill="#e0e0e0"/></svg>
<div class="r" style="left:1621px;top:113px;width:11px;height:17px;background:#777;border-radius:3px;"></div>
<div class="r" style="left:1429px;top:175px;width:206px;height:10px;background:#4a4a4a;"></div>
<div class="r" style="left:1448px;top:180px;width:9px;height:5px;background:#6e6e6e;border-radius:2px 2px 0 0;"></div>
<div class="r" style="left:1476px;top:180px;width:10px;height:5px;background:#6e6e6e;border-radius:2px 2px 0 0;"></div>
<div class="r" style="left:1505px;top:180px;width:7px;height:5px;background:#6e6e6e;border-radius:2px 2px 0 0;"></div>
<div class="r" style="left:1533px;top:180px;width:11px;height:5px;background:#6e6e6e;border-radius:2px 2px 0 0;"></div>
<div class="r" style="left:1566px;top:180px;width:10px;height:5px;background:#6e6e6e;border-radius:2px 2px 0 0;"></div>
<div class="r" style="left:1593px;top:180px;width:10px;height:5px;background:#6e6e6e;border-radius:2px 2px 0 0;"></div>
<div class="r" style="left:1636px;top:75px;width:1px;height:1005px;background:#2e2e2e;"></div>
<div class="r" style="left:1637px;top:75px;width:38px;height:966px;background:#535353;"></div>
<div class="r" style="left:1675px;top:75px;width:2px;height:966px;background:#2e2e2e;"></div>
<div class="r" style="left:1647px;top:80px;width:18px;height:3px;background:repeating-linear-gradient(90deg,#2f2f2f 0 1px,transparent 1px 2px);"></div>
<div class="r" style="left:1647px;top:129px;width:18px;height:3px;background:repeating-linear-gradient(90deg,#2f2f2f 0 1px,transparent 1px 2px);"></div>
<svg class="r" style="left:1648px;top:89px" width="18" height="18"><g fill="none" stroke="#c8c8c8" stroke-width="1.200"><rect x="1" y="1" width="4" height="4"/><rect x="1" y="7" width="4" height="4"/></g><rect x="1" y="13" width="4.500" height="4.500" fill="#8a8a8a"/><path d="M9 3c5 0 6 5 3 9" fill="none" stroke="#c8c8c8" stroke-width="1.600"/><path d="M8 1l4 2.500-3 3z" fill="#c8c8c8"/></svg>
<div class="r" style="left:1641px;top:113px;width:30px;height:24px;background:#333;border-radius:3px;"></div>
<svg class="r" style="left:1648px;top:118px" width="16" height="14"><path d="M.500 .500l15 6.500-15 6.500z" fill="#b8b8b8"/></svg>
<div class="r" style="left:1637px;top:142px;width:38px;height:1px;background:#3c3c3c;"></div>
<div class="r" style="left:1647px;top:148px;width:18px;height:3px;background:repeating-linear-gradient(90deg,#2f2f2f 0 1px,transparent 1px 2px);"></div>
<svg class="r" style="left:1648px;top:157px" width="18" height="18"><path d="M1 4l4.500-2.500 4.500 2.500v6l-4.500 2.500-4.500-2.500z" fill="none" stroke="#c8c8c8" stroke-width="1.200"/><path d="M1 4l4.500 2.500 4.500-2.500M5.500 6.500v6" stroke="#c8c8c8" stroke-width="1" fill="none"/><rect x="12" y="2" width="4.500" height="4" fill="#c8c8c8"/><rect x="12" y="8" width="4.500" height="4" fill="#c8c8c8"/><rect x="1" y="14.500" width="15.500" height="3.500" fill="#c8c8c8"/><path d="M12.500 15.500h3l-1.500 2z" fill="#333"/></svg>
<div class="r" style="left:1677px;top:75px;width:243px;height:18px;background:#3a3a3a;"></div>
<div class="r" style="left:1677px;top:93px;width:243px;height:948px;background:#454545;"></div>
<div class="r" style="left:1677px;top:93px;width:243px;height:92px;background:#535353;"></div>
<div class="r" style="left:1677px;top:1021px;width:243px;height:20px;background:#4a4a4a;"></div>
<div class="r" style="left:1677px;top:75px;width:40px;height:19px;background:#535353;border-right:1px solid #2c2c2c;box-sizing:border-box;"></div>
<div class="t" style="left:1682.00px;top:76.75px;font-size:10.5px;line-height:14.5px;color:#e8e8e8;letter-spacing:-0.283px;font-weight:bold;">Color</div>
<div class="t" style="left:1724.00px;top:76.75px;font-size:10.5px;line-height:14.5px;color:#9a9a9a;letter-spacing:-0.388px;font-weight:bold;">Muestras</div>
<div class="r" style="left:1773px;top:76px;width:1px;height:17px;background:#2c2c2c;"></div>
<svg class="r" style="left:1900px;top:79px" width="16" height="9"><path d="M0 1.500h5l-2.500 3z" fill="#d0d0d0"/><path d="M6 1h9M6 3.500h9M6 6h9M6 8.500h9" stroke="#d0d0d0" stroke-width="1"/></svg>
<div class="r" style="left:1692px;top:111px;width:19px;height:19px;background:#fff;"></div>
<div class="r" style="left:1681px;top:100px;width:22px;height:22px;background:#c8c8c8;"></div>
<div class="r" style="left:1682px;top:101px;width:20px;height:20px;background:#73377d;border:1px solid #fff;box-sizing:border-box;box-shadow:0 0 0 1px #222 inset;"></div>
<div class="r" style="left:1683px;top:102px;width:18px;height:18px;background:#73377d;"></div>
<div class="t" style="left:1720.00px;top:101.75px;font-size:10.5px;line-height:14.5px;color:#e6e6e6;">R</div>
<div class="r" style="left:1735px;top:101.5px;width:85px;height:5.5px;background:linear-gradient(90deg,#00377d,#ff377d);border:1px solid #333;box-sizing:border-box;"></div>
<svg class="r" style="left:1768px;top:108px" width="11" height="8"><path d="M.500 7.500l5-6.500 5 6.500z" fill="#b0b0b0" stroke="#404040" stroke-width=".8"/></svg>
<div class="r" style="left:1826px;top:100px;width:46px;height:18px;background:#3a3a3a;border:1px solid #303030;box-sizing:border-box;"></div>
<div class="t" style="left:1831.00px;top:102.25px;font-size:10.5px;line-height:14.5px;color:#f0f0f0;">115</div>
<div class="t" style="left:1720.00px;top:125.75px;font-size:10.5px;line-height:14.5px;color:#e6e6e6;">G</div>
<div class="r" style="left:1735px;top:125.5px;width:85px;height:5.5px;background:linear-gradient(90deg,#73007d,#73ff7d);border:1px solid #333;box-sizing:border-box;"></div>
<svg class="r" style="left:1748px;top:132px" width="11" height="8"><path d="M.500 7.500l5-6.500 5 6.500z" fill="#b0b0b0" stroke="#404040" stroke-width=".8"/></svg>
<div class="r" style="left:1826px;top:124px;width:46px;height:18px;background:#3a3a3a;border:1px solid #303030;box-sizing:border-box;"></div>
<div class="t" style="left:1831.00px;top:126.25px;font-size:10.5px;line-height:14.5px;color:#f0f0f0;">55</div>
<div class="t" style="left:1720.00px;top:149.75px;font-size:10.5px;line-height:14.5px;color:#e6e6e6;">B</div>
<div class="r" style="left:1735px;top:149.5px;width:85px;height:5.5px;background:linear-gradient(90deg,#733700,#7337ff);border:1px solid #333;box-sizing:border-box;"></div>
<svg class="r" style="left:1771px;top:156px" width="11" height="8"><path d="M.500 7.500l5-6.500 5 6.500z" fill="#b0b0b0" stroke="#404040" stroke-width=".8"/></svg>
<div class="r" style="left:1826px;top:148px;width:46px;height:18px;background:#3a3a3a;border:1px solid #303030;box-sizing:border-box;"></div>
<div class="t" style="left:1831.00px;top:150.25px;font-size:10.5px;line-height:14.5px;color:#f0f0f0;">125</div>
<div class="r" style="left:1683px;top:176px;width:199px;height:9px;background:linear-gradient(90deg,#f00,#ff0 17%,#0f0 33%,#0ff 50%,#00f 67%,#f0f 83%,#f00 97%,#f00);"></div>
<div class="r" style="left:1683px;top:176px;width:199px;height:9px;background:linear-gradient(rgba(255,255,255,.6),rgba(255,255,255,0) 70%);"></div>
<div class="r" style="left:1874px;top:176px;width:8px;height:5px;background:#fff;"></div>
<div class="r" style="left:1874px;top:181px;width:8px;height:4px;background:#000;"></div>
<div class="r" style="left:1904px;top:185px;width:16px;height:636px;background:#3c3c3c;"></div>
<div class="r" style="left:1904px;top:193px;width:16px;height:15px;background:#2e2e2e;"></div>
<div class="r" style="left:1904px;top:210px;width:16px;height:102px;background:#484848;"></div>
<div class="r" style="left:1904px;top:314px;width:16px;height:20px;background:#2e2e2e;"></div>
<div class="r" style="left:1906px;top:338px;width:14px;height:27px;background:#454545;"></div>
<div class="r" style="left:1906px;top:368px;width:14px;height:27px;background:#454545;"></div>
<div class="r" style="left:1906px;top:398px;width:14px;height:27px;background:#454545;"></div>
<div class="r" style="left:1906px;top:428px;width:14px;height:27px;background:#454545;"></div>
<!-- gen_bottom -->
<div class="r" style="left:41px;top:906px;width:1595px;height:16px;background:#3a3a3a;"></div>
<div class="r" style="left:41px;top:906px;width:48px;height:16px;background:#444;"></div>
<div class="t" style="left:45.00px;top:906.75px;font-size:10.5px;line-height:14.5px;color:#f0f0f0;letter-spacing:-0.493px;">136.07%</div>
<div class="r" style="left:89px;top:906px;width:1px;height:16px;background:#2e2e2e;"></div>
<div class="r" style="left:90px;top:906px;width:22px;height:16px;background:#535353;"></div>
<svg class="r" style="left:95px;top:908px" width="12" height="12"><circle cx="6" cy="6" r="5.500" fill="#c8c8c8"/><path d="M4 3.500h4v2.500h-1.500v3h-2.500z" fill="#444"/></svg>
<div class="r" style="left:112px;top:906px;width:1px;height:16px;background:#2e2e2e;"></div>
<div class="r" style="left:113px;top:906px;width:220px;height:16px;background:#535353;"></div>
<div class="t" style="left:174.00px;top:907.25px;font-size:10.5px;line-height:14.5px;color:#f0f0f0;letter-spacing:-0.381px;">Doc: 1.84 MB/14.2 MB</div>
<div class="r" style="left:333px;top:906px;width:1px;height:16px;background:#2e2e2e;"></div>
<div class="r" style="left:334px;top:906px;width:12px;height:16px;background:#535353;"></div>
<svg class="r" style="left:336px;top:909px" width="8" height="11"><path d="M.500 .500l7 5-7 5z" fill="#f4f4f4"/></svg>
<div class="r" style="left:346px;top:906px;width:1px;height:16px;background:#2e2e2e;"></div>
<div class="r" style="left:347px;top:907px;width:1270px;height:14px;background:linear-gradient(#3e3e3e,#383838);"></div>
<div class="r" style="left:1618px;top:821px;width:16px;height:85px;background:#3c3c3c;"></div>
<div class="r" style="left:1618px;top:906px;width:16px;height:16px;background:#4a4a4a;"></div>
<div class="r" style="left:41px;top:922px;width:1595px;height:3px;background:#2e2e2e;"></div>
<div class="r" style="left:41px;top:925px;width:1595px;height:18px;background:#3a3a3a;"></div>
<div class="r" style="left:41px;top:925px;width:70px;height:18px;background:#454545;"></div>
<div class="t" style="left:48.00px;top:926.75px;font-size:10.5px;line-height:14.5px;color:#8e8e8e;letter-spacing:-0.197px;font-weight:bold;">Mini Bridge</div>
<div class="r" style="left:111px;top:925px;width:1px;height:18px;background:#2c2c2c;"></div>
<div class="r" style="left:112px;top:925px;width:88px;height:19px;background:#535353;"></div>
<div class="r" style="left:200px;top:925px;width:1px;height:18px;background:#2c2c2c;"></div>
<div class="t" style="left:119.00px;top:926.75px;font-size:10.5px;line-height:14.5px;color:#e8e8e8;letter-spacing:-0.395px;font-weight:bold;">Línea de tiempo</div>
<svg class="r" style="left:1616px;top:929px" width="16" height="9"><path d="M0 1.500h5l-2.500 3z" fill="#d0d0d0"/><path d="M6 1h9M6 3.500h9M6 6h9M6 8.500h9" stroke="#d0d0d0" stroke-width="1"/></svg>
<div class="r" style="left:41px;top:943px;width:1595px;height:1px;background:#2e2e2e;"></div>
<div class="r" style="left:41px;top:944px;width:1595px;height:75px;background:#484848;"></div>
<div class="r" style="left:41px;top:944px;width:60px;height:75px;background:#5a6370;"></div>
<div class="r" style="left:44px;top:947px;width:54px;height:55px;background:#535353;border:1px solid #fff;box-sizing:border-box;"></div>
<div class="r" style="left:46px;top:949px;width:13px;height:13px;background:#484848;"></div>
<div class="t" style="left:50.00px;top:948.25px;font-size:10.5px;line-height:14.5px;color:#fff;font-weight:bold;">1</div>
<div class="r" style="left:47px;top:963px;width:49px;height:24px;background:linear-gradient(90deg,#1a2a6a,#3a3a7a 30%,#6a3aa0 50%,#2a3a8a 70%,#1a2060);"></div>
<div class="r" style="left:47px;top:981px;width:49px;height:6px;background:#000;"></div>
<div class="r" style="left:50px;top:972px;width:6px;height:10px;background:#e0a080;opacity:.85;border-radius:2px;"></div>
<div class="r" style="left:60px;top:972px;width:6px;height:10px;background:#fff;opacity:.85;border-radius:2px;"></div>
<div class="r" style="left:66px;top:972px;width:6px;height:10px;background:#e8a0a0;opacity:.85;border-radius:2px;"></div>
<div class="r" style="left:78px;top:972px;width:6px;height:10px;background:#d88060;opacity:.85;border-radius:2px;"></div>
<div class="r" style="left:86px;top:972px;width:6px;height:10px;background:#e0b090;opacity:.85;border-radius:2px;"></div>
<div class="t" style="left:60.00px;top:1003.75px;font-size:10.5px;line-height:14.5px;color:#f0f0f0;letter-spacing:-0.267px;">0 seg.</div>
<svg class="r" style="left:88px;top:1008px" width="8" height="5"><path d="M0 0h8l-4 4.500z" fill="#f0f0f0"/></svg>
<div class="r" style="left:41px;top:1019px;width:1595px;height:21px;background:#3c3c3c;"></div>
<div class="r" style="left:41px;top:1019px;width:30px;height:21px;background:#484848;"></div>
<div class="r" style="left:71px;top:1019px;width:275px;height:21px;background:#535353;"></div>
<div class="r" style="left:1618px;top:1019px;width:16px;height:21px;background:#4a4a4a;"></div>
<div class="t" style="left:83.00px;top:1022.75px;font-size:10.5px;line-height:14.5px;color:#f0f0f0;letter-spacing:0.133px;">Infinito</div>
<svg class="r" style="left:130px;top:1027px" width="8" height="6"><path d="M0 0h7.500l-3.750 5z" fill="#e8e8e8"/></svg>
<div class="r" style="left:141px;top:1019px;width:1px;height:21px;background:#444;"></div>
<div class="r" style="left:258px;top:1019px;width:1px;height:21px;background:#444;"></div>
<svg class="r" style="left:147px;top:1025px" width="17" height="10"><path d="M8 0v10l-8-5zM16.500 0v10l-8-5z" fill="#7a7a7a"/></svg>
<svg class="r" style="left:178px;top:1025px" width="10" height="10"><path d="M10 0v10l-10-5z" fill="#7a7a7a"/></svg>
<svg class="r" style="left:209px;top:1025px" width="10" height="10"><path d="M0 0v10l10-5z" fill="#7a7a7a"/></svg>
<svg class="r" style="left:235px;top:1025px" width="17" height="10"><path d="M0 0v10l8-5zM8.500 0v10l8-5z" fill="#7a7a7a"/></svg>
<svg class="r" style="left:266px;top:1025px" width="14" height="11"><path d="M1 2l10 7" stroke="#7a7a7a" stroke-width="2.200"/><circle cx="3" cy="3" r="2" fill="#7a7a7a"/><circle cx="10.500" cy="8" r="2.500" fill="#7a7a7a"/></svg>
<svg class="r" style="left:296px;top:1024px" width="12" height="12"><path d="M1 1h10v10h-5v-5h-5z" fill="#c8c8c8"/><path d="M1 7l4 4h-4z" fill="#c8c8c8"/></svg>
<svg class="r" style="left:324px;top:1023px" width="12" height="13"><path d="M1 3.500h10M4 3.500v-2h4v2" stroke="#7a7a7a" stroke-width="1.300" fill="none"/><path d="M2 5h8l-.8 7.500h-6.400z" fill="#7a7a7a"/></svg>
<div class="r" style="left:0px;top:906px;width:40px;height:135px;background:#535353;"></div>
<div class="r" style="left:1677px;top:1020px;width:243px;height:1px;background:#2e2e2e;"></div>
<div class="r" style="left:1903px;top:821px;width:1px;height:199px;background:#3a3a3a;"></div>
<div class="r" style="left:1904px;top:821px;width:16px;height:199px;background:#3e3e3e;"></div>
<svg class="r" style="left:1715px;top:1025px" width="16" height="10"><rect x="1" y="2" width="8" height="5" rx="2.500" fill="none" stroke="#7a7a7a" stroke-width="1.500"/><rect x="7" y="2" width="8" height="5" rx="2.500" fill="none" stroke="#7a7a7a" stroke-width="1.500"/></svg>
<div class="t" style="left:1743.00px;top:1022.50px;font-size:13px;line-height:17px;color:#c8c8c8;font-style:italic;font-family:"Liberation Serif",serif;">fx</div>
<div class="r" style="left:1757px;top:1036px;width:3px;height:2px;background:#c8c8c8;"></div>
<svg class="r" style="left:1771px;top:1025px" width="14" height="11"><rect width="14" height="11" fill="#b4b4b4"/><circle cx="7" cy="5.500" r="3" fill="#484848"/></svg>
<svg class="r" style="left:1798px;top:1024px" width="14" height="12"><circle cx="6" cy="6" r="5" fill="none" stroke="#b4b4b4" stroke-width="1.400"/><path d="M2.500 9.500a5 5 0 0 1 7-7z" fill="#b4b4b4"/></svg>
<div class="r" style="left:1811px;top:1036px;width:3px;height:2px;background:#c8c8c8;"></div>
<svg class="r" style="left:1824px;top:1024px" width="14" height="11"><path d="M0 11v-10h5l1.500 2h7.500v8z" fill="#b4b4b4"/></svg>
<svg class="r" style="left:1852px;top:1025px" width="12" height="12"><path d="M1 1h10v10h-5v-5h-5z" fill="#b4b4b4"/><path d="M1 7l4 4h-4z" fill="#b4b4b4"/></svg>
<svg class="r" style="left:1878px;top:1023px" width="12" height="13"><path d="M1 3.500h10M4 3.500v-2h4v2" stroke="#b4b4b4" stroke-width="1.300" fill="none"/><path d="M2 5h8l-.8 7.500h-6.400z" fill="#b4b4b4"/><path d="M4.500 6v5.500M6 6v5.500M7.500 6v5.500" stroke="#535353" stroke-width=".8"/></svg>
<!-- gen_task -->
<div class="r" style="left:0px;top:1040px;width:1920px;height:40px;background:linear-gradient(#3f80ea 0,#3a76e6 2px,#285bd8 6px,#2759d6 70%,#2350c4 100%);"></div>
<div class="r" style="left:0px;top:1040px;width:131px;height:40px;background:linear-gradient(#5cb85c 0,#3f9e3f 4px,#2f8a30 50%,#2a7c2c 90%,#216a24);border-radius:0 12px 12px 0/0 20px 20px 0;box-shadow:1px 0 3px rgba(0,0,0,.45);"></div>
<svg class="r" style="left:13px;top:1047px" width="26" height="26" viewBox="0 0 26 26"><g transform="skewX(-8) translate(4,0)"><path d="M1 3c3-2 6-2 10 0v9c-4-2-7-2-10 0z" fill="#e8502c"/><path d="M12.500 3.500c3 2 6 2 10 0v9c-4 2-7 2-10 0z" fill="#6ac040"/><path d="M1 13.500c3-2 6-2 10 0v9c-4-2-7-2-10 0z" fill="#3a78e0"/><path d="M12.500 14c3 2 6 2 10 0v9c-4 2-7 2-10 0z" fill="#f4c820"/></g></svg>
<div class="t" style="left:46.50px;top:1045.75px;font-size:23.5px;line-height:27.5px;color:#fff;letter-spacing:-0.895px;font-weight:bold;font-style:italic;text-shadow:1px 2px 2px rgba(0,0,0,.55);">Inicio</div>
<div class="r" style="left:240px;top:1078px;width:31px;height:2px;background:#7fb0f4;"></div>
<div class="r" style="left:272px;top:1078px;width:8px;height:2px;background:#7fb0f4;"></div>
<div class="r" style="left:485px;top:1078px;width:40px;height:2px;background:#7fb0f4;"></div>
<div class="r" style="left:534px;top:1078px;width:40px;height:2px;background:#7fb0f4;"></div>
<div class="r" style="left:583px;top:1078px;width:40px;height:2px;background:#7fb0f4;"></div>
<div class="r" style="left:925px;top:1078px;width:40px;height:2px;background:#7fb0f4;"></div>
<div class="r" style="left:1318px;top:1078px;width:40px;height:2px;background:#7fb0f4;"></div>
<div class="r" style="left:873px;top:1041px;width:48px;height:39px;background:rgba(255,255,255,.16);"></div>
<div class="r" style="left:873px;top:1078px;width:48px;height:2px;background:#9cc4f8;"></div>
<svg class="r" style="left:147px;top:1047px" width="26" height="26" viewBox="0 0 26 26"><g fill="none" stroke="#fff" stroke-width="1.600"><rect x="6" y="7.500" width="11" height="9"/><path d="M5 4h13M5 21h13"/></g><g fill="#fff"><rect x="19.500" y="6" width="2" height="3"/><rect x="19.500" y="11" width="2" height="8"/></g></svg>
<svg class="r" style="left:198px;top:1047px" width="26" height="26" viewBox="0 0 26 26"><defs><linearGradient id="eg" x1="0" y1="0" x2="1" y2="1"><stop offset="0" stop-color="#35c0e8"/><stop offset=".6" stop-color="#1a7ad4"/><stop offset="1" stop-color="#0c4aa0"/></linearGradient></defs><circle cx="13" cy="13" r="12" fill="url(#eg)"/><path d="M3 10c3-8 16-9 21-1 1 3 0 6-4 6h-8c0 4 5 7 10 4-3 6-12 6-16 0-3-4-3-7-3-9z" fill="#56d86a" opacity=".85"/><path d="M8 13c1-4 8-5 10-1h-7c-1 3 1 7 5 8-5 1-9-3-8-7z" fill="#1458b8"/></svg>
<svg class="r" style="left:246px;top:1047px" width="26" height="26" viewBox="0 0 26 26"><path d="M2 4h8l2 2h12v16H2z" fill="#f4b820"/><rect x="2" y="8" width="22" height="14" fill="#fcd450"/><path d="M7 22v-7h12v7h-3.500v-3.500h-5v3.500z" fill="#3a88d8"/></svg>
<svg class="r" style="left:295px;top:1047px" width="26" height="26" viewBox="0 0 26 26"><path d="M8 7v-2c0-2 10-2 10 0v2" fill="none" stroke="#3aa0e8" stroke-width="2"/><rect x="2.500" y="7" width="21" height="17" rx="2.500" fill="#f4f6fa"/><rect x="8" y="10.500" width="4.500" height="4.500" fill="#f25022"/><rect x="13.500" y="10.500" width="4.500" height="4.500" fill="#7fba00"/><rect x="8" y="16" width="4.500" height="4.500" fill="#00a4ef"/><rect x="13.500" y="16" width="4.500" height="4.500" fill="#ffb900"/></svg>
<svg class="r" style="left:345px;top:1047px" width="26" height="26" viewBox="0 0 26 26"><circle cx="13" cy="14" r="8" fill="none" stroke="#fff" stroke-width="4"/><path d="M13 14l5-5" stroke="#fff" stroke-width="2.500"/><circle cx="13" cy="14" r="10.500" fill="none" stroke="#fff" stroke-width="1.500" stroke-dasharray="1.500 3" opacity=".8"/></svg>
<svg class="r" style="left:393px;top:1047px" width="26" height="26" viewBox="0 0 26 26"><path d="M3 5l18-2 2 14-18 3z" fill="#c8d0dc" stroke="#8a94a4"/><path d="M5 7l15-1.500 1.500 10-15 2z" fill="#e8eef8"/><path d="M6 14l3-4 2 3 3-6 2 5 3-2" fill="none" stroke="#4a7ac0" stroke-width="1.200"/><path d="M9 21h9l1 3h-11z" fill="#b8c0cc"/></svg>
<svg class="r" style="left:443px;top:1047px" width="26" height="26" viewBox="0 0 26 26"><rect x="1" y="6" width="24" height="16" fill="#28a8ea"/><path d="M1 6l12 9 12-9z" fill="#e8f6ff"/></svg>
<svg class="r" style="left:493px;top:1047px" width="26" height="26" viewBox="0 0 26 26"><circle cx="13" cy="13" r="12" fill="#4a86e8"/><circle cx="10" cy="13" r="4.500" fill="#3cc050"/><path d="M14 10c4-2 8 0 8 3s-4 5-8 3c2-2 2-4 0-6z" fill="#f4c030"/></svg>
<svg class="r" style="left:541px;top:1047px" width="26" height="26" viewBox="0 0 26 26"><rect x="1" y="1" width="24" height="24" rx="3" fill="#1a1014"/><rect x="5" y="8" width="12" height="10" rx="3" fill="#e83040"/><path d="M17 12l5-3v8l-5-3z" fill="#e83040"/><circle cx="10" cy="13" r="2.500" fill="none" stroke="#fff" stroke-width="1.200"/><path d="M3 6v-3h3M20 3h3v3M3 20v3h3M23 20v3h-3" fill="none" stroke="#e83040" stroke-width="1"/></svg>
<svg class="r" style="left:590px;top:1047px" width="26" height="26" viewBox="0 0 26 26"><circle cx="13" cy="13" r="12" fill="#5865f2"/><path d="M6.500 9c4-2.500 9-2.500 13 0 2 3 2.500 6 2 9-2 1.500-3.500 2-5 2l-1-2h-5l-1 2c-1.500 0-3-.5-5-2-.5-3 0-6 2-9z" fill="#fff"/><circle cx="10.300" cy="14" r="1.700" fill="#5865f2"/><circle cx="15.700" cy="14" r="1.700" fill="#5865f2"/></svg>
<svg class="r" style="left:639px;top:1047px" width="26" height="26" viewBox="0 0 26 26"><defs><radialGradient id="bl" cx=".45" cy=".3" r=".8"><stop offset="0" stop-color="#e83020"/><stop offset=".5" stop-color="#8a1408"/><stop offset="1" stop-color="#200806"/></radialGradient></defs><circle cx="13" cy="13" r="12" fill="url(#bl)"/><path d="M8 18c4-4 10-2 12 2" stroke="#f0c040" stroke-width="2.500" fill="none"/></svg>
<svg class="r" style="left:687px;top:1047px" width="26" height="26" viewBox="0 0 26 26"><circle cx="13" cy="13" r="12" fill="#4a5a78"/><rect x="8" y="12" width="10" height="8" rx="1" fill="#fff"/><path d="M10 12v-2.500c0-4 6-4 6 0v2.500" fill="none" stroke="#fff" stroke-width="2"/></svg>
<svg class="r" style="left:736px;top:1047px" width="26" height="26" viewBox="0 0 26 26"><circle cx="13" cy="13" r="12" fill="#4a5a78"/><rect x="8" y="12" width="10" height="8" rx="1" fill="#fff"/><path d="M10 12v-2.500c0-4 6-4 6 0v2.500" fill="none" stroke="#fff" stroke-width="2"/></svg>
<svg class="r" style="left:784px;top:1047px" width="26" height="26" viewBox="0 0 26 26"><path d="M3 16c0-8 14-12 18-5 2 4-3 5-3 8s-3 5-8 4-7-3-7-7z" fill="#e8e4e0"/><circle cx="8" cy="13" r="1.800" fill="#e84030"/><circle cx="12" cy="10" r="1.800" fill="#f0c020"/><circle cx="8" cy="18" r="1.800" fill="#3a70d0"/><circle cx="12.500" cy="20" r="1.800" fill="#40b040"/><path d="M21 2l2 1.500-7 15-2.500-1z" fill="#c88a40"/><path d="M21 2l2 1.500-1.500 3-2-1.500z" fill="#e86020"/></svg>
<svg class="r" style="left:834px;top:1047px" width="26" height="26" viewBox="0 0 26 26"><circle cx="13" cy="13" r="11" fill="none" stroke="#c8207a" stroke-width="2.500" opacity=".9"/><ellipse cx="13" cy="13" rx="4.500" ry="8.500" fill="none" stroke="#d8207a" stroke-width="2.500" opacity=".9"/></svg>
<svg class="r" style="left:884px;top:1047px" width="26" height="26" viewBox="0 0 26 26"><rect x="3" y="3" width="20" height="19" fill="#101060" stroke="#8ab0f0" stroke-width="1.200"/><text x="6" y="17.500" font-size="12.500" font-weight="bold" fill="#9cc0ff" font-family="Liberation Sans" textLength="14" lengthAdjust="spacingAndGlyphs">Ps</text></svg>
<svg class="r" style="left:933px;top:1047px" width="26" height="26" viewBox="0 0 26 26"><circle cx="13" cy="13" r="11.500" fill="#f4f0a0"/><path d="M13 1.500a11.500 11.500 0 0 0 0 23z" fill="#4a7ae0"/><path d="M13 1.500a11.500 11.500 0 0 1 0 23z" fill="#f0e020"/><path d="M8 4c-3 5-3 13 0 18M13 1.500v23" stroke="#e8f0ff" stroke-width="1.500" fill="none"/><path d="M13 9h3v3h2v3h-2v3h-3z" fill="#2a50b0"/></svg>
<svg class="r" style="left:1276px;top:1047px" width="26" height="26" viewBox="0 0 26 26"><circle cx="13" cy="13" r="11.500" fill="#f4f0a0"/><path d="M13 1.500a11.500 11.500 0 0 0 0 23z" fill="#4a7ae0"/><path d="M13 1.500a11.500 11.500 0 0 1 0 23z" fill="#f0e020"/><path d="M8 4c-3 5-3 13 0 18M13 1.500v23" stroke="#e8f0ff" stroke-width="1.500" fill="none"/><path d="M13 9h3v3h2v3h-2v3h-3z" fill="#2a50b0"/></svg>
<svg class="r" style="left:981px;top:1047px" width="26" height="26" viewBox="0 0 26 26"><g fill="#f0307a"><ellipse cx="9" cy="8" rx="3" ry="6" transform="rotate(-20 9 8)"/><ellipse cx="9" cy="17" rx="7" ry="3" transform="rotate(15 9 17)"/><ellipse cx="19" cy="18" rx="5" ry="4"/></g><circle cx="20" cy="17" r="1" fill="#fff"/></svg>
<svg class="r" style="left:1031px;top:1047px" width="26" height="26" viewBox="0 0 26 26"><rect x="1" y="1" width="24" height="24" rx="5" fill="#8a8a8e"/><circle cx="13" cy="13" r="10" fill="#f4f4f4"/><path d="M13 13l-5-4M13 13l5-4" stroke="#222" stroke-width="2"/><path d="M13 13v8" stroke="#d04020" stroke-width="2"/></svg>
<svg class="r" style="left:1079px;top:1047px" width="26" height="26" viewBox="0 0 26 26"><rect x="4" y="1" width="18" height="24" rx="1" fill="#6a7a8a"/><rect x="5.500" y="2.500" width="15" height="5" fill="#4ac8e0"/><g fill="#e8ecf0"><rect x="5.500" y="9" width="4" height="4"/><rect x="11" y="9" width="4" height="4"/><rect x="16.500" y="9" width="4" height="4"/><rect x="5.500" y="14.500" width="4" height="4"/><rect x="11" y="14.500" width="4" height="4"/><rect x="5.500" y="20" width="4" height="4"/><rect x="11" y="20" width="4" height="4"/></g><rect x="16.500" y="14.500" width="4" height="9.500" fill="#2a4a6a"/></svg>
<svg class="r" style="left:1128px;top:1047px" width="26" height="26" viewBox="0 0 26 26"><path d="M5 2h11l5 5v17H5z" fill="#f8f8f8"/><path d="M16 2v5h5z" fill="#d0d4d8"/></svg>
<svg class="r" style="left:1177px;top:1047px" width="26" height="26" viewBox="0 0 26 26"><rect x="1" y="2" width="24" height="22" rx="3" fill="#8a8e94"/><rect x="3" y="5" width="20" height="16" rx="1" fill="#14141c"/><rect x="5" y="8" width="16" height="7" fill="#2a2a48"/><path d="M6 10h8M6 13h5" stroke="#a8b0d0" stroke-width="1"/></svg>
<svg class="r" style="left:1226px;top:1047px" width="26" height="26" viewBox="0 0 26 26"><path d="M8 2l14 3-5 19-15-4z" fill="#a8d8e8"/><path d="M9 4l11 2.500-4 15-12-3z" fill="#d8f0f8" opacity=".7"/><path d="M2 20l15 4 1-2-15-4z" fill="#7a8a94"/></svg>
<svg class="r" style="left:1324px;top:1047px" width="26" height="26" viewBox="0 0 26 26"><circle cx="13" cy="13" r="12" fill="#16223c"/><circle cx="17" cy="10" r="4" fill="none" stroke="#fff" stroke-width="1.800"/><path d="M1 14l9 4c1-2 3-2 4-1l3-4" fill="none" stroke="#fff" stroke-width="3"/><circle cx="10.500" cy="18" r="2.800" fill="#fff"/></svg>
<svg class="r" style="left:1620.5px;top:1053px" width="16" height="16" viewBox="0 0 16 16"><path d="M3 10l5-5 5 5" fill="none" stroke="#fff" stroke-width="1.500"/></svg>
<svg class="r" style="left:1643.5px;top:1052px" width="18" height="16" viewBox="0 0 18 16"><rect x="1" y="3" width="13" height="10" rx="4" fill="#e83040" stroke="#fff" stroke-width=".8"/><path d="M14 6.500l3-1.500v6l-3-1.500z" fill="#e83040" stroke="#fff" stroke-width=".6"/><circle cx="7" cy="8" r="2.200" fill="none" stroke="#fff" stroke-width="1"/></svg>
<svg class="r" style="left:1669.5px;top:1051px" width="16" height="18" viewBox="0 0 16 18"><rect x="2" y="5" width="8" height="8" rx="1.500" fill="none" stroke="#fff" stroke-width="1.300"/><path d="M10 8l3-1.500v5l-3-1.500" fill="none" stroke="#fff" stroke-width="1.200"/><path d="M3 2.500c2-1.500 5-1.500 7 0M3 15.500c2 1.500 5 1.500 7 0" fill="none" stroke="#fff" stroke-width="1"/></svg>
<svg class="r" style="left:1693.5px;top:1051px" width="14" height="18" viewBox="0 0 14 18"><rect x="4.500" y="1" width="5" height="10" rx="2.500" fill="#fff"/><path d="M2.500 8c0 6 9 6 9 0M7 13v3M4 16.500h6" fill="none" stroke="#fff" stroke-width="1.200"/></svg>
<svg class="r" style="left:1716.5px;top:1052px" width="18" height="16" viewBox="0 0 18 16"><rect x="4" y="2" width="12" height="8" fill="none" stroke="#fff" stroke-width="1.300"/><rect x="1" y="1" width="4" height="3.500" fill="#2759d6" stroke="#fff" stroke-width="1"/><path d="M3 4.500v6h4M10 10v3M6 13.500h8" fill="none" stroke="#fff" stroke-width="1.300"/></svg>
<svg class="r" style="left:1739.5px;top:1052px" width="18" height="16" viewBox="0 0 18 16"><path d="M1.500 6h2.500l3.500-3.500v11l-3.500-3.500h-2.500z" fill="none" stroke="#fff" stroke-width="1.200"/><path d="M9.500 5.500c1.300 1.500 1.300 3.500 0 5M11.800 3.800c2.200 2.500 2.200 6 0 8.500M14 2c3 3.500 3 8.500 0 12" fill="none" stroke="#fff" stroke-width="1.100"/></svg>
<div class="t" style="left:1769.00px;top:1052.50px;font-size:11px;line-height:15px;color:#fff;letter-spacing:-1.004px;">ESP</div>
<div class="t" style="left:1803.00px;top:1043.25px;font-size:11.5px;line-height:15.5px;color:#fff;letter-spacing:-0.048px;">05:36 p. m.</div>
<div class="t" style="left:1803.00px;top:1061.25px;font-size:11.5px;line-height:15.5px;color:#fff;letter-spacing:0.045px;">02/05/2024</div>
<svg class="r" style="left:1876px;top:1050px" width="24" height="24" viewBox="0 0 24 24"><path d="M2 2h16v12h-10l-4 4v-4h-2z" fill="#fff"/><path d="M5 5.500h10M5 8h10M5 10.500h7" stroke="#2759d6" stroke-width="1"/><circle cx="17" cy="17" r="6" fill="#1a2a5a" stroke="#b8c8e8" stroke-width="1"/><text x="17" y="20.800" font-size="10" font-weight="bold" fill="#fff" text-anchor="middle" font-family="Liberation Sans">4</text></svg>
<!-- gen_dialog -->
<div class="r" style="left:109px;top:185px;width:1803px;height:636px;background:#f0f0f0;box-shadow:0 0 0 1px rgba(60,60,60,.55),0 2px 10px rgba(0,0,0,.45);"></div>
<div class="r" style="left:109px;top:185px;width:1803px;height:30px;background:#fff;"></div>
<div class="r" style="left:118px;top:192px;width:14px;height:14px;background:#1b2a6b;box-shadow:0 1px 0 #5a6aa8;"></div>
<div class="t" style="left:120.50px;top:192.75px;font-size:8.5px;line-height:12.5px;color:#9db8f0;letter-spacing:-0.448px;font-weight:bold;">Ps</div>
<div class="t" style="left:138.00px;top:192.00px;font-size:12px;line-height:16px;color:#000;letter-spacing:0.133px;">Abrir</div>
<svg class="r" style="left:1891px;top:193px" width="12" height="12"><path d="M0.7 0.7L11 11M11 0.7L0.7 11" stroke="#111" stroke-width="1.1"/></svg>
<div class="t" style="left:156.00px;top:232.50px;font-size:11px;line-height:15px;color:#000;letter-spacing:-0.258px;">Buscar en:</div>
<div class="r" style="left:214px;top:229px;width:261px;height:22px;background:#fff;border:1px solid #707070;box-sizing:border-box;"></div>
<div class="r" style="left:222px;top:233px;width:13px;height:15px;background:#f7de84;border-radius:1px;"></div>
<div class="r" style="left:233px;top:243px;width:2px;height:5px;background:#e8c860;"></div>
<div class="t" style="left:240.00px;top:232.00px;font-size:12px;line-height:16px;color:#000;letter-spacing:-0.799px;">STAGES</div>
<svg class="r" style="left:460px;top:237px" width="10" height="7"><path d="M0.8 0.8L5 5.2 9.2 0.8" fill="none" stroke="#444" stroke-width="1.2"/></svg>
<svg class="r" style="left:490px;top:232px" width="16" height="16"><defs><radialGradient id="bk" cx=".4" cy=".3" r=".8"><stop offset="0" stop-color="#7cc4ee"/><stop offset=".55" stop-color="#1f7fc4"/><stop offset="1" stop-color="#0b4f8c"/></radialGradient></defs><circle cx="8" cy="8" r="7.3" fill="url(#bk)" stroke="#8ab4d8" stroke-width=".8"/><path d="M11.5 8H5.2M7.8 5L4.8 8l3 3" fill="none" stroke="#fff" stroke-width="1.8"/></svg>
<svg class="r" style="left:513px;top:231px" width="16" height="17"><path d="M1 8l4-1.5h7.5l-1.2 9-10.3 0.5z" fill="#f3dc7a" stroke="#c8a838" stroke-width=".8"/><path d="M6.5 14V7.5H4L8.5 1.5 13 7.5h-2.5V12z" fill="#3aa83a" stroke="#1f7a28" stroke-width=".8"/></svg>
<svg class="r" style="left:536px;top:232px" width="17" height="16"><path d="M1 6.5l4.5-1.2 2 1.2h6.8l-1.4 7.5-11.4 1z" fill="#f3dc7a" stroke="#c8a838" stroke-width=".8"/><circle cx="13" cy="4" r="2.6" fill="#f08a30"/><circle cx="13" cy="4" r="1.1" fill="#fff2c0"/></svg>
<svg class="r" style="left:559px;top:232px" width="26" height="16"><rect x=".8" y=".8" width="14.4" height="13.4" rx="1" fill="#fff" stroke="#1f5fa8" stroke-width="1.4"/><rect x=".8" y=".8" width="14.4" height="3.4" fill="#1f5fa8"/><g fill="#4a6a8a"><rect x="3.5" y="5.6" width="2.2" height="2.6"/><rect x="7" y="5.6" width="2.2" height="2.6"/><rect x="10.5" y="5.6" width="2.2" height="2.6"/><rect x="3.5" y="10" width="2.2" height="2.6"/><rect x="7" y="10" width="2.2" height="2.6" fill="#111"/><rect x="10.5" y="10" width="2.2" height="2.6"/></g><path d="M17.5 6h7l-3.5 4z" fill="#111"/></svg>
<div class="r" style="left:121px;top:259px;width:88px;height:501px;background:#f5f5f5;"></div>
<div class="t" style="left:126.50px;top:297.25px;font-size:11.5px;line-height:15.5px;color:#000;letter-spacing:0.164px;">Acceso rápido</div>
<div class="t" style="left:139.50px;top:357.25px;font-size:11.5px;line-height:15.5px;color:#000;letter-spacing:0.108px;">Escritorio</div>
<div class="t" style="left:135.50px;top:417.25px;font-size:11.5px;line-height:15.5px;color:#000;letter-spacing:0.126px;">Bibliotecas</div>
<div class="t" style="left:134.00px;top:477.25px;font-size:11.5px;line-height:15.5px;color:#000;letter-spacing:-0.067px;">Este equipo</div>
<div class="t" style="left:154.50px;top:537.25px;font-size:11.5px;line-height:15.5px;color:#000;letter-spacing:-0.698px;">Red</div>
<svg class="r" style="left:148px;top:265px" width="34" height="32"><path d="M19 2l3.2 8.8 9.3.3-7.4 5.7 2.6 9-7.7-5.3-7.7 5.3 2.6-9-7.4-5.7 9.3-.3z" fill="#2ea4ec" stroke="#1a86d0" stroke-width=".8"/><path d="M3 8h9M1 13h7M2 18h7M4 23h6" stroke="#6ac0f4" stroke-width="1.2"/></svg>
<svg class="r" style="left:149px;top:329px" width="30" height="22"><defs><linearGradient id="dk" x1="0" y1="0" x2="1" y2="1"><stop offset="0" stop-color="#1a86e0"/><stop offset="1" stop-color="#2fa8f4"/></linearGradient></defs><rect x=".5" y=".5" width="28.5" height="20.5" fill="url(#dk)" stroke="#1578cc"/><path d="M2 18.5h20" stroke="#bfe4ff" stroke-width="1"/><path d="M24 18.5h1M26 18.5h1" stroke="#fff" stroke-width="1"/></svg>
<svg class="r" style="left:149px;top:387px" width="30" height="26"><path d="M1 3.5c0-1 .6-1.5 1.500-1.500h8l2.500 2.500h15v20h-27z" fill="#f8cf4a"/><path d="M1 2.500h10v3h-10z" fill="#e0a820"/><rect x="1" y="6" width="28" height="18.500" fill="#fbd65c"/><path d="M7 24.500v-8c0-1 .5-1.500 1.500-1.500h13c1 0 1.500.5 1.500 1.500v8h-4.500v-4.500h-7v4.500z" fill="#3a8ad8"/></svg>
<svg class="r" style="left:147px;top:445px" width="36" height="30"><path d="M10 2l21 3.500v15l-21-2z" fill="#2a98ec" stroke="#6ab8f0" stroke-width="1"/><path d="M18 19.500l5 .6v3l-5-.6z" fill="#c8d0d8"/><path d="M14 23l13 1.600v1.400l-13-1.600z" fill="#dde2e8"/><path d="M2 24.500l12-3 9 2.500-12 3.800z" fill="#e4e6ea" stroke="#c8ccd2" stroke-width=".6"/></svg>
<svg class="r" style="left:148px;top:505px" width="34" height="30"><circle cx="21" cy="11" r="9.500" fill="#3a8ed8"/><path d="M14 6c3 2 6-2 9 1s5 2 6 5M13 14c4-1 6 3 10 1" stroke="#a8d8f8" stroke-width="1.600" fill="none"/><path d="M2 9l17 3v13.500l-17-2.500z" fill="#2a98ec" stroke="#7cc4f4" stroke-width="1"/><path d="M9 24.500l5 .7v2.500l-5-.7z" fill="#c8d0d8"/><path d="M6 27l11 1.500v1l-11-1.500z" fill="#dde2e8"/></svg>
<div class="r" style="left:214px;top:258px;width:1677px;height:447px;background:#fff;"></div>
<div class="t" style="left:216.50px;top:719.50px;font-size:11px;line-height:15px;color:#000;letter-spacing:-0.221px;">Nombre de archivo:</div>
<div class="t" style="left:216.50px;top:745.50px;font-size:11px;line-height:15px;color:#000;letter-spacing:-0.116px;">Tipo de archivo:</div>
<div class="r" style="left:316px;top:715px;width:1467px;height:22px;background:#fff;border:1px solid #7a7a7a;box-sizing:border-box;"></div>
<div class="r" style="left:316px;top:743px;width:1467px;height:21px;background:linear-gradient(#e8e8e8,#dcdcdc);border:1px solid #adadad;box-sizing:border-box;"></div>
<div class="t" style="left:321.00px;top:746.50px;font-size:11px;line-height:15px;color:#000;letter-spacing:-0.240px;">Todos los formatos</div>
<svg class="r" style="left:1768px;top:723px" width="10" height="7"><path d="M0.8 0.8L5 5.2 9.2 0.8" fill="none" stroke="#444" stroke-width="1.2"/></svg>
<svg class="r" style="left:1768px;top:751px" width="10" height="7"><path d="M0.8 0.8L5 5.2 9.2 0.8" fill="none" stroke="#444" stroke-width="1.2"/></svg>
<div class="r" style="left:1817px;top:716px;width:73px;height:21px;background:linear-gradient(#eaeaea,#dedede);border:2px solid #1f6fc4;box-sizing:border-box;"></div>
<div class="t" style="left:1842.50px;top:719.50px;font-size:11px;line-height:15px;color:#000;letter-spacing:-0.245px;">Abrir</div>
<div class="r" style="left:1817px;top:742px;width:73px;height:21px;background:linear-gradient(#e6e6e6,#dcdcdc);border:1px solid #adadad;box-sizing:border-box;"></div>
<div class="t" style="left:1832.00px;top:745.50px;font-size:11px;line-height:15px;color:#000;letter-spacing:-0.127px;">Cancelar</div>
<svg class="r" style="left:1900px;top:810px" width="10" height="10"><g fill="#bdbdbd"><rect x="7" y="1" width="2" height="2"/><rect x="4" y="4" width="2" height="2"/><rect x="7" y="4" width="2" height="2"/><rect x="1" y="7" width="2" height="2"/><rect x="4" y="7" width="2" height="2"/><rect x="7" y="7" width="2" height="2"/></g></svg>
<svg class="r" style="left:1870px;top:231px" width="18" height="16"><path d="M1.500 4c0-2 1-2.500 2-2.500h3c1 0 1.500 .5 1.500 2h7.500v10h-14z" fill="#f0f48c" stroke="#222" stroke-width="1"/><path d="M8.500 6.500v6M5.500 9.500h6M6.400 7.400l4.200 4.200M10.600 7.400l-4.200 4.200" stroke="#111" stroke-width="1"/><circle cx="8.500" cy="9.500" r="1" fill="#f0f48c"/></svg>
<div class="r" style="left:1584px;top:264px;width:102px;height:131px;background:#cce8ff;border:1px dotted #333;box-sizing:border-box;"></div>
<svg class="r" style="left:240px;top:275px" width="64" height="90" viewBox="0 0 64 90"><defs><linearGradient id="fla" x1="0" y1="0" x2="1" y2="0"><stop offset="0" stop-color="#f9dc8c"/><stop offset="1" stop-color="#fce9ae"/></linearGradient><clipPath id="fca"><rect x="0" y="0" width="36" height="64"/></clipPath><clipPath id="bca"><rect x="0" y="0" width="38" height="69"/></clipPath></defs><path d="M0.5 0.5H48V70H0.5Z" fill="#f3d583"/><ellipse cx="40" cy="80" rx="22" ry="3" fill="#000" opacity=".06"/><g transform="translate(22,9) skewY(1.5)" clip-path="url(#bca)"><rect x="0" y="0" width="38" height="69" fill="#f1f1f8"/><path d="M0 1.5H26.5 L34.5 11.5 V67 H0Z" fill="#12105e"/><path d="M26.5 1.5 L34.5 11.5 H26.5 Z" fill="#a9c8fb"/><text x="9" y="55" font-size="31" font-weight="bold" fill="#8ab4f8" textLength="18.6" lengthAdjust="spacingAndGlyphs">Ps</text></g><g transform="translate(6,5.8) skewY(20)"><rect x="-0.8" y="-1.2" width="38.3" height="66.2" fill="#fbfbfd"/><g clip-path="url(#fca)"><rect width="36" height="64" fill="#c2105c"/><rect x="0" y="30" width="36" height="34" fill="#d4125f" opacity=".6"/><path d="M17 24c2 0 3 2 2 5l2 9-2 12h-1.500l-.5-11-1.500 11h-1.500l-1-12 1.500-9c-1-3 0-5 2.500-5z" fill="#c8a0a0" opacity=".75"/></g></g><path d="M0.3 2 L16.3 14.5 V82.5 L12.5 82 L0.3 69.500Z" fill="url(#fla)"/></svg>
<svg class="r" style="left:345px;top:275px" width="64" height="90" viewBox="0 0 64 90"><defs><linearGradient id="flb" x1="0" y1="0" x2="1" y2="0"><stop offset="0" stop-color="#f9dc8c"/><stop offset="1" stop-color="#fce9ae"/></linearGradient><clipPath id="fcb"><rect x="0" y="0" width="36" height="64"/></clipPath><clipPath id="bcb"><rect x="0" y="0" width="38" height="69"/></clipPath></defs><path d="M0.5 0.5H48V70H0.5Z" fill="#f3d583"/><ellipse cx="40" cy="80" rx="22" ry="3" fill="#000" opacity=".06"/><g transform="translate(22,9) skewY(1.5)" clip-path="url(#bcb)"><rect width="38" height="69" fill="#080608"/><path d="M0 2.500H38M0 10H38M0 58H38M0 62H38" stroke="#d8b030" stroke-width="1"/><g fill="#8030d0"><circle cx="20" cy="6.500" r="2"/><circle cx="32" cy="6.500" r="2"/></g><path d="M21 0V69" stroke="#d8b030" stroke-width=".8"/></g><g transform="translate(6,5.8) skewY(20)"><rect x="-0.8" y="-1.2" width="38.3" height="66.2" fill="#fbfbfd"/><g clip-path="url(#fcb)"><rect width="36" height="64" fill="#050505"/><path d="M0 2.500H36M0 9H36M0 56H36" stroke="#7a30c0" stroke-width="1"/><path d="M0 4.500H36" stroke="#e8c030" stroke-width="1"/><g fill="#f0c030"><circle cx="13" cy="7" r="1.600"/><circle cx="21" cy="7" r="1.600"/><circle cx="30" cy="7" r="1.600"/></g></g></g><path d="M0.3 2 L16.3 14.5 V82.5 L12.5 82 L0.3 69.500Z" fill="url(#flb)"/></svg>
<svg class="r" style="left:450px;top:275px" width="64" height="90" viewBox="0 0 64 90"><defs><linearGradient id="flc" x1="0" y1="0" x2="1" y2="0"><stop offset="0" stop-color="#f9dc8c"/><stop offset="1" stop-color="#fce9ae"/></linearGradient><clipPath id="fcc"><rect x="0" y="0" width="36" height="64"/></clipPath><clipPath id="bcc"><rect x="0" y="0" width="38" height="69"/></clipPath></defs><path d="M0.5 0.5H48V70H0.5Z" fill="#f3d583"/><ellipse cx="40" cy="80" rx="22" ry="3" fill="#000" opacity=".06"/><g transform="translate(22,9) skewY(1.5)" clip-path="url(#bcc)"><rect width="38" height="69" fill="#a21cf0"/><ellipse cx="30" cy="50" rx="13" ry="16" fill="#8a8a8a"/><ellipse cx="31" cy="44" rx="6" ry="5" fill="#c8c8c8"/><path d="M24 20l14-6v20z" fill="#e8d0ff" opacity=".5"/></g><g transform="translate(6,5.8) skewY(20)"><rect x="-0.8" y="-1.2" width="38.3" height="66.2" fill="#fbfbfd"/><g clip-path="url(#fcc)"><rect x="0" y="0" width="36" height="64" fill="#f1f1f8"/><path d="M0 1.5H24.5 L32.5 11.5 V62 H0Z" fill="#12105e"/><path d="M24.5 1.5 L32.5 11.5 H24.5 Z" fill="#a9c8fb"/><rect x="-2" y="4" width="26" height="13" fill="#8ab4f8"/><text x="23" y="14.6" font-size="11.5" font-weight="bold" fill="#12105e" text-anchor="end" textLength="19" lengthAdjust="spacingAndGlyphs">PSD</text><text x="11.5" y="52" font-size="33" font-weight="bold" fill="#8ab4f8" textLength="19.8" lengthAdjust="spacingAndGlyphs">Ps</text></g></g><path d="M0.3 2 L16.3 14.5 V82.5 L12.5 82 L0.3 69.500Z" fill="url(#flc)"/></svg>
<svg class="r" style="left:555px;top:275px" width="64" height="90" viewBox="0 0 64 90"><path d="M1 0.500H48V7.500H55.500V77H39V68H1Z" fill="#f0d077"/><path d="M16 3 H46 V12 H53 V77 H39V68H16Z" fill="#ecc96a"/><rect x="39.500" y="16" width="12.500" height="62" fill="#f4f6fa"/><path d="M41 22h9M41 26h9M41 30h9M41 34h9M41 38h9M41 60h9M41 64h9M41 68h9M41 72h9" stroke="#c8d4e6" stroke-width="1.2"/><rect x="41" y="43" width="9.500" height="13" fill="#5aa0d8"/><path d="M41 47l9.500 3v3l-9.500-3z" fill="#d8ecf8"/><path d="M52.500 49 h4 l3.500 4 V77 H52.500Z" fill="#f6db8e"/><path d="M6 3.500 L39.500 14 V80.500 L33 80 L16 72Z" fill="#f9df92"/><path d="M19 12 L27 15 V77 L19 73Z" fill="#f4d583" opacity=".55"/><path d="M0.3 2 L16.3 14.500 V82.500 L12.500 82 L0.3 69.500Z" fill="#fbe5a4"/></svg>
<svg class="r" style="left:660px;top:275px" width="64" height="90" viewBox="0 0 64 90"><defs><linearGradient id="fle" x1="0" y1="0" x2="1" y2="0"><stop offset="0" stop-color="#f9dc8c"/><stop offset="1" stop-color="#fce9ae"/></linearGradient><clipPath id="fce"><rect x="0" y="0" width="36" height="64"/></clipPath><clipPath id="bce"><rect x="0" y="0" width="38" height="69"/></clipPath></defs><path d="M0.5 0.5H48V70H0.5Z" fill="#f3d583"/><ellipse cx="40" cy="80" rx="22" ry="3" fill="#000" opacity=".06"/><g transform="translate(22,9) skewY(1.5)" clip-path="url(#bce)"><rect x="0" y="0" width="38" height="69" fill="#f1f1f8"/><path d="M0 1.5H26.5 L34.5 11.5 V67 H0Z" fill="#12105e"/><path d="M26.5 1.5 L34.5 11.5 H26.5 Z" fill="#a9c8fb"/><text x="9" y="55" font-size="31" font-weight="bold" fill="#8ab4f8" textLength="18.6" lengthAdjust="spacingAndGlyphs">Ps</text></g><g transform="translate(6,5.8) skewY(20)"><rect x="-0.8" y="-1.2" width="38.3" height="66.2" fill="#fbfbfd"/><g clip-path="url(#fce)"><rect width="36" height="64" fill="#8a4a2a"/><rect y="0" width="36" height="22" fill="#a06038"/><path d="M12 26c4-8 12-10 18-4l6 6v14l-8 8-10-2-6-8z" fill="#d8a070"/><path d="M20 18c4-3 10-2 12 2l-2 10-8-2z" fill="#7a3014"/><path d="M10 40l10 2 8 10-4 6-12-4z" fill="#f4eee8"/><path d="M16 46l8 2 2 12-10-4z" fill="#2a1810"/><rect y="54" width="36" height="10" fill="#6a3018"/></g></g><path d="M0.3 2 L16.3 14.5 V82.5 L12.5 82 L0.3 69.500Z" fill="url(#fle)"/></svg>
<svg class="r" style="left:765px;top:275px" width="64" height="90" viewBox="0 0 64 90"><path d="M1 0.500H48V7.500H55.500V77H39V68H1Z" fill="#f0d077"/><path d="M16 3 H46 V12 H53 V77 H39V68H16Z" fill="#ecc96a"/><rect x="39.500" y="16" width="12.500" height="62" fill="#f4f6fa"/><path d="M41 22h9M41 26h9M41 30h9M41 34h9M41 38h9M41 60h9M41 64h9M41 68h9M41 72h9" stroke="#c8d4e6" stroke-width="1.2"/><rect x="41" y="43" width="9.500" height="13" fill="#5aa0d8"/><path d="M41 47l9.500 3v3l-9.500-3z" fill="#d8ecf8"/><path d="M52.500 49 h4 l3.500 4 V77 H52.500Z" fill="#f6db8e"/><path d="M6 3.500 L39.500 14 V80.500 L33 80 L16 72Z" fill="#f9df92"/><path d="M19 12 L27 15 V77 L19 73Z" fill="#f4d583" opacity=".55"/><path d="M0.3 2 L16.3 14.500 V82.500 L12.500 82 L0.3 69.500Z" fill="#fbe5a4"/></svg>
<svg class="r" style="left:870px;top:275px" width="64" height="90" viewBox="0 0 64 90"><defs><linearGradient id="flg" x1="0" y1="0" x2="1" y2="0"><stop offset="0" stop-color="#f9dc8c"/><stop offset="1" stop-color="#fce9ae"/></linearGradient><clipPath id="fcg"><rect x="0" y="0" width="36" height="64"/></clipPath><clipPath id="bcg"><rect x="0" y="0" width="38" height="69"/></clipPath></defs><path d="M0.5 0.5H48V70H0.5Z" fill="#f3d583"/><ellipse cx="40" cy="80" rx="22" ry="3" fill="#000" opacity=".06"/><g transform="translate(22,9) skewY(1.5)" clip-path="url(#bcg)"><rect width="38" height="69" fill="#249c24"/></g><g transform="translate(6,5.8) skewY(20)"><rect x="-0.8" y="-1.2" width="38.3" height="66.2" fill="#fbfbfd"/><g clip-path="url(#fcg)"><rect width="36" height="64" fill="#23a023"/><path d="M16 26l3-3 3 2 3-1-1 5 2 6-3 1-1 6 3 5-3 1-3-5-3 4-3-1 3-6-2-5z" fill="#5a4a18"/><path d="M17 28h5v5h-5z" fill="#d8a030"/></g></g><path d="M0.3 2 L16.3 14.5 V82.5 L12.5 82 L0.3 69.500Z" fill="url(#flg)"/></svg>
<svg class="r" style="left:975px;top:275px" width="64" height="90" viewBox="0 0 64 90"><defs><linearGradient id="flh" x1="0" y1="0" x2="1" y2="0"><stop offset="0" stop-color="#f9dc8c"/><stop offset="1" stop-color="#fce9ae"/></linearGradient><clipPath id="fch"><rect x="0" y="0" width="36" height="64"/></clipPath><clipPath id="bch"><rect x="0" y="0" width="38" height="69"/></clipPath></defs><path d="M0.5 0.5H48V70H0.5Z" fill="#f3d583"/><ellipse cx="40" cy="80" rx="22" ry="3" fill="#000" opacity=".06"/><g transform="translate(22,9) skewY(1.5)" clip-path="url(#bch)"><rect x="0" y="0" width="38" height="69" fill="#f1f1f8"/><path d="M0 1.5H26.5 L34.5 11.5 V67 H0Z" fill="#12105e"/><path d="M26.5 1.5 L34.5 11.5 H26.5 Z" fill="#a9c8fb"/><text x="9" y="55" font-size="31" font-weight="bold" fill="#8ab4f8" textLength="18.6" lengthAdjust="spacingAndGlyphs">Ps</text></g><g transform="translate(6,5.8) skewY(20)"><rect x="-0.8" y="-1.2" width="38.3" height="66.2" fill="#fbfbfd"/><g clip-path="url(#fch)"><rect width="36" height="64" fill="#a868e8"/><rect width="36" height="8" fill="#f4f0ff"/><ellipse cx="28" cy="18" rx="6" ry="7" fill="#f4f4f8"/><path d="M10 22c0-10 14-12 18-2 2 6 2 14-2 20l-14 2c-4-6-4-14-2-20z" fill="#f050b0"/><ellipse cx="19" cy="30" rx="6.500" ry="8" fill="#f0b8a8"/><path d="M8 50c2-8 8-10 12-10s10 2 13 8v16H8z" fill="#28242c"/><path d="M13 42c2-3 12-3 14 0l-2 6h-10z" fill="#f0b8a8"/></g></g><path d="M0.3 2 L16.3 14.5 V82.5 L12.5 82 L0.3 69.500Z" fill="url(#flh)"/></svg>
<svg class="r" style="left:1080px;top:275px" width="64" height="90" viewBox="0 0 64 90"><defs><linearGradient id="fli" x1="0" y1="0" x2="1" y2="0"><stop offset="0" stop-color="#f9dc8c"/><stop offset="1" stop-color="#fce9ae"/></linearGradient><clipPath id="fci"><rect x="0" y="0" width="36" height="64"/></clipPath><clipPath id="bci"><rect x="0" y="0" width="38" height="69"/></clipPath></defs><path d="M0.5 0.5H48V70H0.5Z" fill="#f3d583"/><ellipse cx="40" cy="80" rx="22" ry="3" fill="#000" opacity=".06"/><g transform="translate(22,9) skewY(1.5)" clip-path="url(#bci)"><rect width="38" height="69" fill="#2a7c2a"/></g><g transform="translate(6,5.8) skewY(20)"><rect x="-0.8" y="-1.2" width="38.3" height="66.2" fill="#fbfbfd"/><g clip-path="url(#fci)"><rect x="0" y="0" width="36" height="64" fill="#f1f1f8"/><path d="M0 1.5H24.5 L32.5 11.5 V62 H0Z" fill="#12105e"/><path d="M24.5 1.5 L32.5 11.5 H24.5 Z" fill="#a9c8fb"/><rect x="-2" y="4" width="26" height="13" fill="#8ab4f8"/><text x="23" y="14.6" font-size="11.5" font-weight="bold" fill="#12105e" text-anchor="end" textLength="19" lengthAdjust="spacingAndGlyphs">PSD</text><text x="11.5" y="52" font-size="33" font-weight="bold" fill="#8ab4f8" textLength="19.8" lengthAdjust="spacingAndGlyphs">Ps</text></g></g><path d="M0.3 2 L16.3 14.5 V82.5 L12.5 82 L0.3 69.500Z" fill="url(#fli)"/></svg>
<svg class="r" style="left:1185px;top:275px" width="64" height="90" viewBox="0 0 64 90"><defs><linearGradient id="flj" x1="0" y1="0" x2="1" y2="0"><stop offset="0" stop-color="#f9dc8c"/><stop offset="1" stop-color="#fce9ae"/></linearGradient><clipPath id="fcj"><rect x="0" y="0" width="36" height="64"/></clipPath><clipPath id="bcj"><rect x="0" y="0" width="38" height="69"/></clipPath></defs><path d="M0.5 0.5H48V70H0.5Z" fill="#f3d583"/><ellipse cx="40" cy="80" rx="22" ry="3" fill="#000" opacity=".06"/><g transform="translate(22,9) skewY(1.5)" clip-path="url(#bcj)"><rect width="38" height="69" fill="#fafafa"/><path d="M26 8l2 10 6-6-2 10 6 2-8 6 4 8-8-2-2 14-4-12-8 4 6-10-8-4 8-4-4-10 8 6z" fill="#1c2430"/><circle cx="27" cy="16" r="4" fill="#fafafa"/></g><g transform="translate(6,5.8) skewY(20)"><rect x="-0.8" y="-1.2" width="38.3" height="66.2" fill="#fbfbfd"/><g clip-path="url(#fcj)"><rect width="36" height="64" fill="#2f4d6b"/></g></g><path d="M0.3 2 L16.3 14.5 V82.5 L12.5 82 L0.3 69.500Z" fill="url(#flj)"/></svg>
<svg class="r" style="left:1290px;top:275px" width="64" height="90" viewBox="0 0 64 90"><defs><linearGradient id="flk" x1="0" y1="0" x2="1" y2="0"><stop offset="0" stop-color="#f9dc8c"/><stop offset="1" stop-color="#fce9ae"/></linearGradient><clipPath id="fck"><rect x="0" y="0" width="36" height="64"/></clipPath><clipPath id="bck"><rect x="0" y="0" width="38" height="69"/></clipPath></defs><path d="M0.5 0.5H48V70H0.5Z" fill="#f3d583"/><ellipse cx="40" cy="80" rx="22" ry="3" fill="#000" opacity=".06"/><g transform="translate(22,9) skewY(1.5)" clip-path="url(#bck)"><rect width="38" height="69" fill="#1e8c1e"/><path d="M22 28c3-1 5 2 5 6l3 4-2 3-6-3z" fill="#e0c068"/></g><g transform="translate(6,5.8) skewY(20)"><rect x="-0.8" y="-1.2" width="38.3" height="66.2" fill="#fbfbfd"/><g clip-path="url(#fck)"><rect x="0" y="0" width="36" height="64" fill="#f1f1f8"/><path d="M0 1.5H24.5 L32.5 11.5 V62 H0Z" fill="#12105e"/><path d="M24.5 1.5 L32.5 11.5 H24.5 Z" fill="#a9c8fb"/><rect x="-2" y="4" width="26" height="13" fill="#8ab4f8"/><text x="23" y="14.6" font-size="11.5" font-weight="bold" fill="#12105e" text-anchor="end" textLength="19" lengthAdjust="spacingAndGlyphs">PSD</text><text x="11.5" y="52" font-size="33" font-weight="bold" fill="#8ab4f8" textLength="19.8" lengthAdjust="spacingAndGlyphs">Ps</text></g></g><path d="M0.3 2 L16.3 14.5 V82.5 L12.5 82 L0.3 69.500Z" fill="url(#flk)"/></svg>
<svg class="r" style="left:1395px;top:275px" width="64" height="90" viewBox="0 0 64 90"><defs><linearGradient id="fll" x1="0" y1="0" x2="1" y2="0"><stop offset="0" stop-color="#f9dc8c"/><stop offset="1" stop-color="#fce9ae"/></linearGradient><clipPath id="fcl"><rect x="0" y="0" width="36" height="64"/></clipPath><clipPath id="bcl"><rect x="0" y="0" width="38" height="69"/></clipPath></defs><path d="M0.5 0.5H48V70H0.5Z" fill="#f3d583"/><ellipse cx="40" cy="80" rx="22" ry="3" fill="#000" opacity=".06"/><g transform="translate(22,9) skewY(1.5)" clip-path="url(#bcl)"><rect x="0" y="0" width="38" height="69" fill="#f1f1f8"/><path d="M0 1.5H26.5 L34.5 11.5 V67 H0Z" fill="#12105e"/><path d="M26.5 1.5 L34.5 11.5 H26.5 Z" fill="#a9c8fb"/><text x="9" y="55" font-size="31" font-weight="bold" fill="#8ab4f8" textLength="18.6" lengthAdjust="spacingAndGlyphs">Ps</text></g><g transform="translate(6,5.8) skewY(20)"><rect x="-0.8" y="-1.2" width="38.3" height="66.2" fill="#fbfbfd"/><g clip-path="url(#fcl)"><rect x="0" y="0" width="36" height="64" fill="#f1f1f8"/><path d="M0 1.5H24.5 L32.5 11.5 V62 H0Z" fill="#12105e"/><path d="M24.5 1.5 L32.5 11.5 H24.5 Z" fill="#a9c8fb"/><rect x="-2" y="4" width="26" height="13" fill="#8ab4f8"/><text x="23" y="14.6" font-size="11.5" font-weight="bold" fill="#12105e" text-anchor="end" textLength="19" lengthAdjust="spacingAndGlyphs">PSD</text><text x="11.5" y="52" font-size="33" font-weight="bold" fill="#8ab4f8" textLength="19.8" lengthAdjust="spacingAndGlyphs">Ps</text></g></g><path d="M0.3 2 L16.3 14.5 V82.5 L12.5 82 L0.3 69.500Z" fill="url(#fll)"/></svg>
<svg class="r" style="left:1500px;top:275px" width="64" height="90" viewBox="0 0 64 90"><defs><linearGradient id="flm" x1="0" y1="0" x2="1" y2="0"><stop offset="0" stop-color="#f9dc8c"/><stop offset="1" stop-color="#fce9ae"/></linearGradient><clipPath id="fcm"><rect x="0" y="0" width="36" height="64"/></clipPath><clipPath id="bcm"><rect x="0" y="0" width="38" height="69"/></clipPath></defs><path d="M0.5 0.5H48V70H0.5Z" fill="#f3d583"/><ellipse cx="40" cy="80" rx="22" ry="3" fill="#000" opacity=".06"/><g transform="translate(22,9) skewY(1.5)" clip-path="url(#bcm)"><rect x="0" y="0" width="38" height="69" fill="#f1f1f8"/><path d="M0 1.5H26.5 L34.5 11.5 V67 H0Z" fill="#12105e"/><path d="M26.5 1.5 L34.5 11.5 H26.5 Z" fill="#a9c8fb"/><text x="9" y="55" font-size="31" font-weight="bold" fill="#8ab4f8" textLength="18.6" lengthAdjust="spacingAndGlyphs">Ps</text></g><g transform="translate(6,5.8) skewY(20)"><rect x="-0.8" y="-1.2" width="38.3" height="66.2" fill="#fbfbfd"/><g clip-path="url(#fcm)"><rect x="0" y="0" width="36" height="64" fill="#f1f1f8"/><path d="M0 1.5H24.5 L32.5 11.5 V62 H0Z" fill="#12105e"/><path d="M24.5 1.5 L32.5 11.5 H24.5 Z" fill="#a9c8fb"/><rect x="-2" y="4" width="26" height="13" fill="#8ab4f8"/><text x="23" y="14.6" font-size="11.5" font-weight="bold" fill="#12105e" text-anchor="end" textLength="19" lengthAdjust="spacingAndGlyphs">PSD</text><text x="11.5" y="52" font-size="33" font-weight="bold" fill="#8ab4f8" textLength="19.8" lengthAdjust="spacingAndGlyphs">Ps</text></g></g><path d="M0.3 2 L16.3 14.5 V82.5 L12.5 82 L0.3 69.500Z" fill="url(#flm)"/></svg>
<svg class="r" style="left:1605px;top:275px" width="64" height="90" viewBox="0 0 64 90"><defs><linearGradient id="fln" x1="0" y1="0" x2="1" y2="0"><stop offset="0" stop-color="#f9dc8c"/><stop offset="1" stop-color="#fce9ae"/></linearGradient><clipPath id="fcn"><rect x="0" y="0" width="36" height="64"/></clipPath><clipPath id="bcn"><rect x="0" y="0" width="38" height="69"/></clipPath></defs><path d="M0.5 0.5H48V70H0.5Z" fill="#f3d583"/><ellipse cx="40" cy="80" rx="22" ry="3" fill="#000" opacity=".06"/><g transform="translate(22,9) skewY(1.5)" clip-path="url(#bcn)"><rect width="38" height="69" fill="#fbfbfb"/><path d="M13.2 1.0 L16.8 1.0 L24.3 47.1 L30.0 52.2 L30.0 65.0 L0.0 65.0 L0.0 52.2 L5.7 47.1Z" fill="#f08210"/><path d="M11.7 10.6 L18.3 10.6 L20.1 21.5 L9.9 21.5Z" fill="#d4d6e0"/><path d="M8.4 30.4 L21.6 30.4 L23.4 41.3 L6.6 41.3Z" fill="#d4d6e0"/><path d="M0.0 56.0 L30.0 56.0 L30.0 65.0 L0.0 65.0Z" fill="#e06c06"/></g><g transform="translate(6,5.8) skewY(20)"><rect x="-0.8" y="-1.2" width="38.3" height="66.2" fill="#fbfbfd"/><g clip-path="url(#fcn)"><rect width="36" height="64" fill="#fbfbfb"/><path d="M17.2 1.0 L20.8 1.0 L28.3 43.5 L34.0 48.2 L34.0 60.0 L4.0 60.0 L4.0 48.2 L9.7 43.5Z" fill="#f08210"/><path d="M15.7 9.8 L22.3 9.8 L24.1 19.9 L13.9 19.9Z" fill="#d4d6e0"/><path d="M12.4 28.1 L25.6 28.1 L27.4 38.2 L10.6 38.2Z" fill="#d4d6e0"/><path d="M4.0 51.7 L34.0 51.7 L34.0 60.0 L4.0 60.0Z" fill="#e06c06"/></g></g><path d="M0.3 2 L16.3 14.5 V82.5 L12.5 82 L0.3 69.500Z" fill="url(#fln)"/></svg>
<svg class="r" style="left:1710px;top:275px" width="64" height="90" viewBox="0 0 64 90"><path d="M3 0.500H48V44H52.500V68.500H3Z" fill="#f3d583"/><path d="M16 12 H40 V68.500 H16Z" fill="#f0cf78" opacity=".55"/><path d="M0.3 2 L16.3 14.500 V82.500 L12.500 82 L0.3 69.500Z" fill="#fbe5a4"/></svg>
<div class="t" style="left:240.75px;top:364.20px;font-size:11.6px;line-height:15.6px;color:#000;letter-spacing:-0.118px;">Beware the</div><div class="t" style="left:228.75px;top:379.20px;font-size:11.6px;line-height:15.6px;color:#000;letter-spacing:0.065px;">shadow fuckers</div>
<div class="t" style="left:337.50px;top:364.20px;font-size:11.6px;line-height:15.6px;color:#000;letter-spacing:-0.127px;">BZ MIDNIGHT</div>
<div class="t" style="left:447.00px;top:364.20px;font-size:11.6px;line-height:15.6px;color:#000;letter-spacing:-0.634px;">CATS PLACE</div>
<div class="t" style="left:555.00px;top:364.20px;font-size:11.6px;line-height:15.6px;color:#000;letter-spacing:0.163px;">comissions</div>
<div class="t" style="left:650.50px;top:364.20px;font-size:11.6px;line-height:15.6px;color:#000;letter-spacing:0.229px;">cookie concert</div>
<div class="t" style="left:767.75px;top:364.20px;font-size:11.6px;line-height:15.6px;color:#000;letter-spacing:-0.460px;">CUPHEAD</div>
<div class="t" style="left:866.00px;top:364.20px;font-size:11.6px;line-height:15.6px;color:#000;letter-spacing:-0.315px;">FINAL FIGHT</div>
<div class="t" style="left:985.50px;top:364.20px;font-size:11.6px;line-height:15.6px;color:#000;letter-spacing:-0.613px;">FRIDAY</div>
<div class="t" style="left:1073.75px;top:364.20px;font-size:11.6px;line-height:15.6px;color:#000;letter-spacing:-0.883px;">GENERIC RPG</div><div class="t" style="left:1090.75px;top:379.20px;font-size:11.6px;line-height:15.6px;color:#000;letter-spacing:-0.913px;">BATTLE</div>
<div class="t" style="left:1186.75px;top:364.20px;font-size:11.6px;line-height:15.6px;color:#000;letter-spacing:0.148px;">Halloween</div>
<div class="t" style="left:1277.75px;top:364.20px;font-size:11.6px;line-height:15.6px;color:#000;letter-spacing:-1.065px;">JEWELRY STORE</div>
<div class="t" style="left:1399.00px;top:364.20px;font-size:11.6px;line-height:15.6px;color:#000;letter-spacing:0.181px;">legit edits</div>
<div class="t" style="left:1479.50px;top:364.20px;font-size:11.6px;line-height:15.6px;color:#000;letter-spacing:0.075px;">Minus8 stage sfw y</div><div class="t" style="left:1517.00px;top:379.20px;font-size:11.6px;line-height:15.6px;color:#000;letter-spacing:0.287px;">nsfw</div>
<div class="t" style="left:1590.25px;top:364.20px;font-size:11.6px;line-height:15.6px;color:#000;letter-spacing:-0.763px;">NOT DEVELOPED</div><div class="t" style="left:1625.00px;top:379.20px;font-size:11.6px;line-height:15.6px;color:#000;letter-spacing:-1.187px;">YET</div>
<div class="t" style="left:1701.75px;top:364.20px;font-size:11.6px;line-height:15.6px;color:#000;letter-spacing:0.004px;">Nueva carpeta</div>
<svg class="r" style="left:240px;top:423px" width="64" height="90" viewBox="0 0 64 90"><path d="M0.500 0.500H48V70H0.500Z" fill="#f3d583"/><g transform="translate(11,4) skewY(8)"><rect width="49" height="66" fill="#c4dcb4"/><rect x="2.4" y="1.5" width="3.5" height="4.600" fill="#8aa8d0" stroke="#222" stroke-width=".7"/><rect x="6.9" y="1.5" width="3.5" height="4.600" fill="#c0c0c0" stroke="#222" stroke-width=".7"/><rect x="20.0" y="1.5" width="6.8" height="4.600" fill="#c0c0c0" stroke="#222" stroke-width=".7"/><rect x="27.8" y="1.5" width="4.8" height="4.600" fill="#e8c060" stroke="#222" stroke-width=".7"/><rect x="38.9" y="1.5" width="3.1" height="4.600" fill="#88b888" stroke="#222" stroke-width=".7"/><rect x="43.0" y="1.5" width="5.0" height="4.600" fill="#88b888" stroke="#222" stroke-width=".7"/><rect x="11.1" y="8.5" width="7.2" height="4.600" fill="#e8e0b0" stroke="#222" stroke-width=".7"/><rect x="19.3" y="8.5" width="6.4" height="4.600" fill="#8aa8d0" stroke="#222" stroke-width=".7"/><rect x="26.7" y="8.5" width="4.2" height="4.600" fill="#c0c0c0" stroke="#222" stroke-width=".7"/><rect x="31.9" y="8.5" width="7.2" height="4.600" fill="#88b888" stroke="#222" stroke-width=".7"/><rect x="6.1" y="15.5" width="5.5" height="4.600" fill="#88b888" stroke="#222" stroke-width=".7"/><rect x="12.6" y="15.5" width="5.2" height="4.600" fill="#88b888" stroke="#222" stroke-width=".7"/><rect x="18.8" y="15.5" width="4.3" height="4.600" fill="#e8c060" stroke="#222" stroke-width=".7"/><rect x="24.1" y="15.5" width="3.2" height="4.600" fill="#88b888" stroke="#222" stroke-width=".7"/><rect x="28.3" y="15.5" width="5.6" height="4.600" fill="#e8e0b0" stroke="#222" stroke-width=".7"/><rect x="34.9" y="15.5" width="3.7" height="4.600" fill="#e8c060" stroke="#222" stroke-width=".7"/><rect x="39.6" y="15.5" width="5.1" height="4.600" fill="#70b0b0" stroke="#222" stroke-width=".7"/><rect x="2.7" y="22.5" width="4.8" height="4.600" fill="#e8e0b0" stroke="#222" stroke-width=".7"/><rect x="8.4" y="22.5" width="6.2" height="4.600" fill="#e8e0b0" stroke="#222" stroke-width=".7"/><rect x="15.6" y="22.5" width="3.5" height="4.600" fill="#b090c8" stroke="#222" stroke-width=".7"/><rect x="20.1" y="22.5" width="4.4" height="4.600" fill="#b090c8" stroke="#222" stroke-width=".7"/><rect x="30.1" y="22.5" width="4.5" height="4.600" fill="#e8e0b0" stroke="#222" stroke-width=".7"/><rect x="43.1" y="22.5" width="4.9" height="4.600" fill="#e8e0b0" stroke="#222" stroke-width=".7"/><rect x="6.6" y="29.5" width="6.9" height="4.600" fill="#e8c060" stroke="#222" stroke-width=".7"/><rect x="14.4" y="29.5" width="4.5" height="4.600" fill="#70b0b0" stroke="#222" stroke-width=".7"/><rect x="19.9" y="29.5" width="4.5" height="4.600" fill="#8aa8d0" stroke="#222" stroke-width=".7"/><rect x="25.4" y="29.5" width="4.7" height="4.600" fill="#d86a6a" stroke="#222" stroke-width=".7"/><rect x="31.0" y="29.5" width="5.3" height="4.600" fill="#e8e0b0" stroke="#222" stroke-width=".7"/><rect x="37.3" y="29.5" width="8.0" height="4.600" fill="#70b0b0" stroke="#222" stroke-width=".7"/><rect x="6.9" y="36.5" width="5.1" height="4.600" fill="#d86a6a" stroke="#222" stroke-width=".7"/><rect x="13.0" y="36.5" width="3.3" height="4.600" fill="#8aa8d0" stroke="#222" stroke-width=".7"/><rect x="17.3" y="36.5" width="6.0" height="4.600" fill="#b090c8" stroke="#222" stroke-width=".7"/><rect x="24.4" y="36.5" width="4.6" height="4.600" fill="#c0c0c0" stroke="#222" stroke-width=".7"/><rect x="35.4" y="36.5" width="6.3" height="4.600" fill="#b090c8" stroke="#222" stroke-width=".7"/><rect x="42.7" y="36.5" width="4.2" height="4.600" fill="#d86a6a" stroke="#222" stroke-width=".7"/><rect x="2.3" y="43.5" width="5.2" height="4.600" fill="#d09060" stroke="#222" stroke-width=".7"/><rect x="8.5" y="43.5" width="7.2" height="4.600" fill="#d86a6a" stroke="#222" stroke-width=".7"/><rect x="16.7" y="43.5" width="3.2" height="4.600" fill="#c0c0c0" stroke="#222" stroke-width=".7"/><rect x="20.9" y="43.5" width="4.0" height="4.600" fill="#88b888" stroke="#222" stroke-width=".7"/><rect x="25.9" y="43.5" width="3.7" height="4.600" fill="#e8e0b0" stroke="#222" stroke-width=".7"/><rect x="43.5" y="43.5" width="4.5" height="4.600" fill="#d86a6a" stroke="#222" stroke-width=".7"/><rect x="4.0" y="50.5" width="3.5" height="4.600" fill="#8aa8d0" stroke="#222" stroke-width=".7"/><rect x="8.4" y="50.5" width="4.7" height="4.600" fill="#e8e0b0" stroke="#222" stroke-width=".7"/><rect x="14.1" y="50.5" width="7.1" height="4.600" fill="#88b888" stroke="#222" stroke-width=".7"/><rect x="22.2" y="50.5" width="4.7" height="4.600" fill="#70b0b0" stroke="#222" stroke-width=".7"/><rect x="32.3" y="50.5" width="7.8" height="4.600" fill="#d86a6a" stroke="#222" stroke-width=".7"/><rect x="41.1" y="50.5" width="5.0" height="4.600" fill="#88b888" stroke="#222" stroke-width=".7"/><rect x="5.0" y="57.5" width="3.3" height="4.600" fill="#70b0b0" stroke="#222" stroke-width=".7"/><rect x="9.3" y="57.5" width="5.8" height="4.600" fill="#d09060" stroke="#222" stroke-width=".7"/><rect x="16.2" y="57.5" width="4.1" height="4.600" fill="#8aa8d0" stroke="#222" stroke-width=".7"/><rect x="44.6" y="57.5" width="3.4" height="4.600" fill="#e8e0b0" stroke="#222" stroke-width=".7"/></g><path d="M0.300 2 L16.300 14.500 V82.500 L12.500 82 L0.300 69.500Z" fill="#fbe5a4"/></svg>
<svg class="r" style="left:345px;top:423px" width="64" height="90" viewBox="0 0 64 90"><defs><linearGradient id="flp" x1="0" y1="0" x2="1" y2="0"><stop offset="0" stop-color="#f9dc8c"/><stop offset="1" stop-color="#fce9ae"/></linearGradient><clipPath id="fcp"><rect x="0" y="0" width="36" height="64"/></clipPath><clipPath id="bcp"><rect x="0" y="0" width="38" height="69"/></clipPath></defs><path d="M0.5 0.5H48V70H0.5Z" fill="#f3d583"/><ellipse cx="40" cy="80" rx="22" ry="3" fill="#000" opacity=".06"/><g transform="translate(22,9) skewY(1.5)" clip-path="url(#bcp)"><rect x="0" y="0" width="38" height="69" fill="#f1f1f8"/><path d="M0 1.5H26.5 L34.5 11.5 V67 H0Z" fill="#12105e"/><path d="M26.5 1.5 L34.5 11.5 H26.5 Z" fill="#a9c8fb"/><text x="9" y="55" font-size="31" font-weight="bold" fill="#8ab4f8" textLength="18.6" lengthAdjust="spacingAndGlyphs">Ps</text></g><g transform="translate(6,5.8) skewY(20)"><rect x="-0.8" y="-1.2" width="38.3" height="66.2" fill="#fbfbfd"/><g clip-path="url(#fcp)"><rect width="36" height="64" fill="#2b6411"/></g></g><path d="M0.3 2 L16.3 14.5 V82.5 L12.5 82 L0.3 69.500Z" fill="url(#flp)"/></svg>
<svg class="r" style="left:450px;top:423px" width="64" height="90" viewBox="0 0 64 90"><path d="M1 0.500H48V7.500H55.500V77H39V68H1Z" fill="#f0d077"/><path d="M16 3 H46 V12 H53 V77 H39V68H16Z" fill="#ecc96a"/><rect x="39.500" y="16" width="12.500" height="62" fill="#f4f6fa"/><path d="M41 22h9M41 26h9M41 30h9M41 34h9M41 38h9M41 60h9M41 64h9M41 68h9M41 72h9" stroke="#c8d4e6" stroke-width="1.2"/><rect x="41" y="43" width="9.500" height="13" fill="#5aa0d8"/><path d="M41 47l9.500 3v3l-9.500-3z" fill="#d8ecf8"/><path d="M52.500 49 h4 l3.500 4 V77 H52.500Z" fill="#f6db8e"/><path d="M6 3.500 L39.500 14 V80.500 L33 80 L16 72Z" fill="#f9df92"/><path d="M19 12 L27 15 V77 L19 73Z" fill="#f4d583" opacity=".55"/><path d="M0.3 2 L16.3 14.500 V82.500 L12.500 82 L0.3 69.500Z" fill="#fbe5a4"/></svg>
<svg class="r" style="left:555px;top:423px" width="64" height="90" viewBox="0 0 64 90"><defs><linearGradient id="flr" x1="0" y1="0" x2="1" y2="0"><stop offset="0" stop-color="#f9dc8c"/><stop offset="1" stop-color="#fce9ae"/></linearGradient><clipPath id="fcr"><rect x="0" y="0" width="36" height="64"/></clipPath><clipPath id="bcr"><rect x="0" y="0" width="38" height="69"/></clipPath></defs><path d="M0.5 0.5H48V70H0.5Z" fill="#f3d583"/><ellipse cx="40" cy="80" rx="22" ry="3" fill="#000" opacity=".06"/><g transform="translate(22,9) skewY(1.5)" clip-path="url(#bcr)"><rect width="38" height="69" fill="#f4f4f8"/><ellipse cx="28" cy="14" rx="7" ry="6.500" fill="#2a70c8"/><path d="M24 11c3-1 5 1 8 0" stroke="#4ab04a" stroke-width="2" fill="none"/><ellipse cx="15" cy="4" rx="6" ry="4" fill="#4aa83a"/><path d="M24 36c0-6 10-6 10 0s-6 5-8 8c-3 2-4-2-2-4z" fill="#e8e8d8" stroke="#606848" stroke-width="1.500"/></g><g transform="translate(6,5.8) skewY(20)"><rect x="-0.8" y="-1.2" width="38.3" height="66.2" fill="#fbfbfd"/><g clip-path="url(#fcr)"><rect x="0" y="0" width="36" height="64" fill="#f1f1f8"/><path d="M0 1.5H24.5 L32.5 11.5 V62 H0Z" fill="#12105e"/><path d="M24.5 1.5 L32.5 11.5 H24.5 Z" fill="#a9c8fb"/><rect x="-2" y="4" width="26" height="13" fill="#8ab4f8"/><text x="23" y="14.6" font-size="11.5" font-weight="bold" fill="#12105e" text-anchor="end" textLength="19" lengthAdjust="spacingAndGlyphs">PSD</text><text x="11.5" y="52" font-size="33" font-weight="bold" fill="#8ab4f8" textLength="19.8" lengthAdjust="spacingAndGlyphs">Ps</text></g></g><path d="M0.3 2 L16.3 14.5 V82.5 L12.5 82 L0.3 69.500Z" fill="url(#flr)"/></svg>
<svg class="r" style="left:660px;top:423px" width="64" height="90" viewBox="0 0 64 90"><defs><linearGradient id="fls" x1="0" y1="0" x2="1" y2="0"><stop offset="0" stop-color="#f9dc8c"/><stop offset="1" stop-color="#fce9ae"/></linearGradient><clipPath id="fcs"><rect x="0" y="0" width="36" height="64"/></clipPath><clipPath id="bcs"><rect x="0" y="0" width="38" height="69"/></clipPath></defs><path d="M0.5 0.5H48V70H0.5Z" fill="#f3d583"/><ellipse cx="40" cy="80" rx="22" ry="3" fill="#000" opacity=".06"/><g transform="translate(22,9) skewY(1.5)" clip-path="url(#bcs)"><rect width="38" height="69" fill="#f6f8f8"/><path d="M12 14l4-6 3 5 4-7 4 6 4-4 4 6 3-4v59H12z" fill="#1c4a48"/><path d="M12 40c8-4 16 2 26-2v31H12z" fill="#256a80"/></g><g transform="translate(6,5.8) skewY(20)"><rect x="-0.8" y="-1.2" width="38.3" height="66.2" fill="#fbfbfd"/><g clip-path="url(#fcs)"><rect width="36" height="64" fill="#1a2420"/><path d="M0 0h20l16 40v24H0z" fill="#20282c"/><path d="M18 0h18v30z" fill="#f0f2f0"/><path d="M0 44c10-4 20 4 36 2v18H0z" fill="#1f5a44"/><path d="M6 18l3 6-3 8-3-8z" fill="#c89020"/></g></g><path d="M0.3 2 L16.3 14.5 V82.5 L12.5 82 L0.3 69.500Z" fill="url(#fls)"/></svg>
<svg class="r" style="left:760px;top:415px;box-shadow:1px 1px 2px rgba(0,0,0,.35);" width="68" height="90" viewBox="0 0 68 90"><rect width="68" height="90" fill="#526e8c"/><path d="M22 14l3 8h18l3-8 3 14c0 10-6 14-15 14s-15-4-15-14z" fill="#b4b8c0"/><circle cx="34" cy="9" r="3.500" fill="#e8c840"/><path d="M26 28h6M36 28h6" stroke="#f4f4f4" stroke-width="2.500"/><path d="M22 46c4-4 20-4 24 0l3 10-6 4H25l-6-4z" fill="#a8b0b8"/><rect x="27" y="48" width="14" height="5" fill="#7cc8b8"/><path d="M18 72c0-12 8-16 16-16s16 4 16 16c0 8-3 14-6 18H24c-3-4-6-10-6-18z" fill="#1a1a1c"/><circle cx="46" cy="84" r="3.500" fill="#d8dce0"/></svg>
<svg class="r" style="left:854px;top:442px;box-shadow:1px 1px 2px rgba(0,0,0,.35);" width="90" height="63" viewBox="0 0 90 63"><rect width="90" height="63" fill="#08061c"/><path d="M14 22l30-14 12 4V6l34 2v32H14z" fill="#b0a8a0"/><path d="M44 8l12 4v26H44z" fill="#8a8480"/><g fill="#ffd040"><rect x="34" y="20" width="9" height="10"/><rect x="48" y="18" width="7" height="11"/><rect x="62" y="17" width="8" height="8"/><rect x="76" y="11" width="5" height="6"/><rect x="84" y="11" width="5" height="6"/><rect x="76" y="20" width="5" height="6"/><rect x="84" y="20" width="5" height="6"/></g><rect x="8" y="30" width="82" height="10" fill="#e0a030"/><g fill="#3a1c10"><rect x="20" y="31" width="3" height="9"/><rect x="34" y="31" width="3" height="9"/><rect x="48" y="31" width="3" height="9"/><rect x="62" y="31" width="3" height="9"/><rect x="76" y="31" width="3" height="9"/></g><path d="M0 44c20-6 60-6 90 0v12H0z" fill="#3ad8c8"/><path d="M0 28c6 0 8 8 6 16l10 8-4 11H0z" fill="#c85a38"/><ellipse cx="12" cy="52" rx="12" ry="6" fill="#e8a088"/><ellipse cx="56" cy="57" rx="14" ry="5" fill="#e0907c"/><ellipse cx="80" cy="44" rx="8" ry="5" fill="#e8b0a0"/><circle cx="25" cy="42" r="4" fill="#5030a0"/><rect x="0" y="58" width="90" height="5" fill="#101018"/></svg>
<svg class="r" style="left:980px;top:415px;box-shadow:1px 1px 2px rgba(0,0,0,.35);" width="49" height="90" viewBox="0 0 49 90"><rect width="49" height="90" fill="#f4f4f8"/><path d="M15 6c4-6 14-4 16 2 1 5-1 9-3 11l-9 0c-4-3-6-8-4-13z" fill="#6a2c20"/><ellipse cx="23" cy="15" rx="4.500" ry="5" fill="#c89070"/><path d="M8 12l4-2 2 10-3 8-4-4z" fill="#b8785a"/><path d="M13 22l14-2 6 10 6 4-2 5-10-3-1 6H16z" fill="#8a3438"/><path d="M16 22l10-1 3 18-11 1z" fill="#5a7ab8"/><path d="M15 40h14l6 34h-7l-5-24-6 26H9z" fill="#34383c"/><path d="M7 74h10l1 10H6z M27 72h8l4 7-9 2z" fill="#8a7028"/></svg>
<svg class="r" style="left:1082px;top:415px;box-shadow:1px 1px 2px rgba(0,0,0,.35);" width="55" height="90" viewBox="0 0 55 90"><rect width="55" height="90" fill="#fff"/><path d="M22 4l2 14M42 3l-12 16" stroke="#1a6a3a" stroke-width="2.500"/><path d="M16 22c0-8 12-10 16-2l-2 12-10 2c-3-2-4-8-4-12z" fill="#6ad888"/><path d="M26 20c4-4 8 0 8 6l-4 6-5-2z" fill="#f8f8f8"/><circle cx="19" cy="31" r="2.500" fill="#d82838"/><path d="M2 33h16" stroke="#909098" stroke-width="1.500"/><path d="M8 24v8" stroke="#b0b0b8" stroke-width="1.200"/><path d="M20 36l-8 10 6 4 6-8z" fill="#e0e0e4"/><path d="M22 36h10l6 18-4 30-5 4-3-30-8-10z" fill="#d8d8dc"/><path d="M20 50c-8 6-10 18-6 28l8-14z M34 44c10 2 18 10 16 22l-6-4-2 12-6-14z" fill="#7ae098"/><path d="M26 78l-3 10h5z" fill="#2a8a4a"/></svg>
<svg class="r" style="left:1169px;top:498px" width="92" height="8" viewBox="0 0 92 8"><rect x="0" y="1" width="92" height="6" rx="2" fill="#ecd078"/><ellipse cx="46" cy="4" rx="22" ry="3.400" fill="#3ac060"/><path d="M40 2.500l-4 1.500 4 1.500z" fill="#fff"/><rect x="40" y="2.800" width="5" height="2.400" fill="#f4f4f4"/><path d="M48 2l6 2-6 2z" fill="#b83018"/></svg>
<div class="r" style="left:1274px;top:453px;width:90px;height:52px;background:#347f0c;box-shadow:1px 1px 2px rgba(0,0,0,.35);"></div>
<div class="r" style="left:1274px;top:485px;width:90px;height:17px;background:#141ea8;"></div>
<div class="r" style="left:1382px;top:416px;width:85px;height:89px;background:#fdfdfd;box-shadow:1px 1px 3px rgba(0,0,0,.4);"></div>
<div class="r" style="left:1383.5px;top:419.5px;width:81px;height:81px;background:#000;background-image:repeating-linear-gradient(90deg,transparent 0 4.100px,#bbb 4.100px 5.060px),repeating-linear-gradient(transparent 0 4.100px,#bbb 4.100px 5.060px);"></div>
<svg class="r" style="left:1484px;top:438px;box-shadow:1px 1px 2px rgba(0,0,0,.35);" width="91" height="67" viewBox="0 0 91 67"><rect width="91" height="67" fill="#ff84ff"/><rect width="44" height="20" fill="#e8d070"/><path d="M0 8c6-8 16-6 20 0l-6 12H0z" fill="#78b088"/><ellipse cx="20" cy="11" rx="12" ry="8" fill="#f0d840"/><rect x="34" y="2" width="10" height="16" fill="#4a68a8"/><rect x="0" y="21" width="44" height="14" fill="#f4f0f0"/><path d="M4 34l8-10 8 10z" fill="#d8905a"/><ellipse cx="12" cy="26" rx="6" ry="3" fill="#b8c8d8"/><rect x="24" y="22" width="18" height="12" fill="#7a4a88"/><rect x="0" y="36" width="34" height="31" fill="#fdfdf8"/><ellipse cx="16" cy="51" rx="14" ry="13" fill="#f0dc50"/><ellipse cx="12" cy="48" rx="5" ry="6" fill="#e0c030"/><rect x="37" y="42" width="31" height="21" fill="#6ab088"/><ellipse cx="54" cy="54" rx="13" ry="8" fill="#f0d840"/><path d="M40 36l8 2-2 10-8-4z" fill="#f0b0a0"/></svg>
<svg class="r" style="left:1588px;top:415px" width="90" height="92" viewBox="0 0 90 92"><defs><radialGradient id="pg" cx=".5" cy=".45" r=".7"><stop offset="0" stop-color="#1c0a86"/><stop offset="1" stop-color="#0c0654"/></radialGradient></defs><path d="M21 1H69L88 20V90H21Z" fill="url(#pg)"/><path d="M69 1L88 20H69Z" fill="#86b4f8"/><rect x="1" y="6" width="63" height="21" fill="#86b4f8"/><rect x="1" y="25" width="63" height="2" fill="#6a98e0"/><text x="17" y="24" font-size="20" font-weight="bold" fill="#14105e" textLength="31" lengthAdjust="spacingAndGlyphs">PSD</text><text x="33" y="75" font-size="49" font-weight="bold" fill="#86b4f8" textLength="45" lengthAdjust="spacingAndGlyphs">Ps</text></svg>
<div class="t" style="left:237.50px;top:512.20px;font-size:11.6px;line-height:15.6px;color:#000;letter-spacing:-0.379px;">POKEMONS</div>
<div class="t" style="left:341.00px;top:512.20px;font-size:11.6px;line-height:15.6px;color:#000;letter-spacing:-0.563px;">POOL PARTY</div>
<div class="t" style="left:452.50px;top:512.20px;font-size:11.6px;line-height:15.6px;color:#000;letter-spacing:-0.080px;">sfw stages</div>
<div class="t" style="left:540.50px;top:512.20px;font-size:11.6px;line-height:15.6px;color:#000;letter-spacing:-0.759px;">STAGE TUTORIAL</div><div class="t" style="left:565.50px;top:527.20px;font-size:11.6px;line-height:15.6px;color:#000;letter-spacing:-1.296px;">ASSETS</div>
<div class="t" style="left:643.50px;top:512.20px;font-size:11.6px;line-height:15.6px;color:#000;letter-spacing:-0.458px;">SUMMONER RIFT</div>
<div class="t" style="left:748.00px;top:512.20px;font-size:11.6px;line-height:15.6px;color:#000;letter-spacing:-0.221px;">2daf67856249b5...</div>
<div class="t" style="left:852.00px;top:512.20px;font-size:11.6px;line-height:15.6px;color:#000;letter-spacing:-0.255px;">8c186e2ad37ad2...</div>
<div class="t" style="left:956.50px;top:512.20px;font-size:11.6px;line-height:15.6px;color:#000;letter-spacing:-0.221px;">220-2204132_cut...</div>
<div class="t" style="left:1100.00px;top:512.20px;font-size:11.6px;line-height:15.6px;color:#000;letter-spacing:-0.118px;">408</div>
<div class="t" style="left:1205.50px;top:512.20px;font-size:11.6px;line-height:15.6px;color:#000;letter-spacing:-0.234px;">asd</div>
<div class="t" style="left:1279.00px;top:512.20px;font-size:11.6px;line-height:15.6px;color:#000;letter-spacing:-0.985px;">GREEN SCREEN</div>
<div class="t" style="left:1393.50px;top:512.20px;font-size:11.6px;line-height:15.6px;color:#000;letter-spacing:0.279px;">Limit colors</div>
<div class="t" style="left:1507.00px;top:512.20px;font-size:11.6px;line-height:15.6px;color:#000;letter-spacing:-0.205px;">U44q0ye</div>
<div class="t" style="left:1607.50px;top:512.20px;font-size:11.6px;line-height:15.6px;color:#000;letter-spacing:0.198px;">yuumi sex</div>
<svg class="r" style="left:804px;top:406px" width="14" height="22"><path d="M1 1v16l3.8-3.6 2.6 6 2.2-1-2.6-5.8h5.2z" fill="#fff" stroke="#000" stroke-width="1"/></svg>
</body></html>
